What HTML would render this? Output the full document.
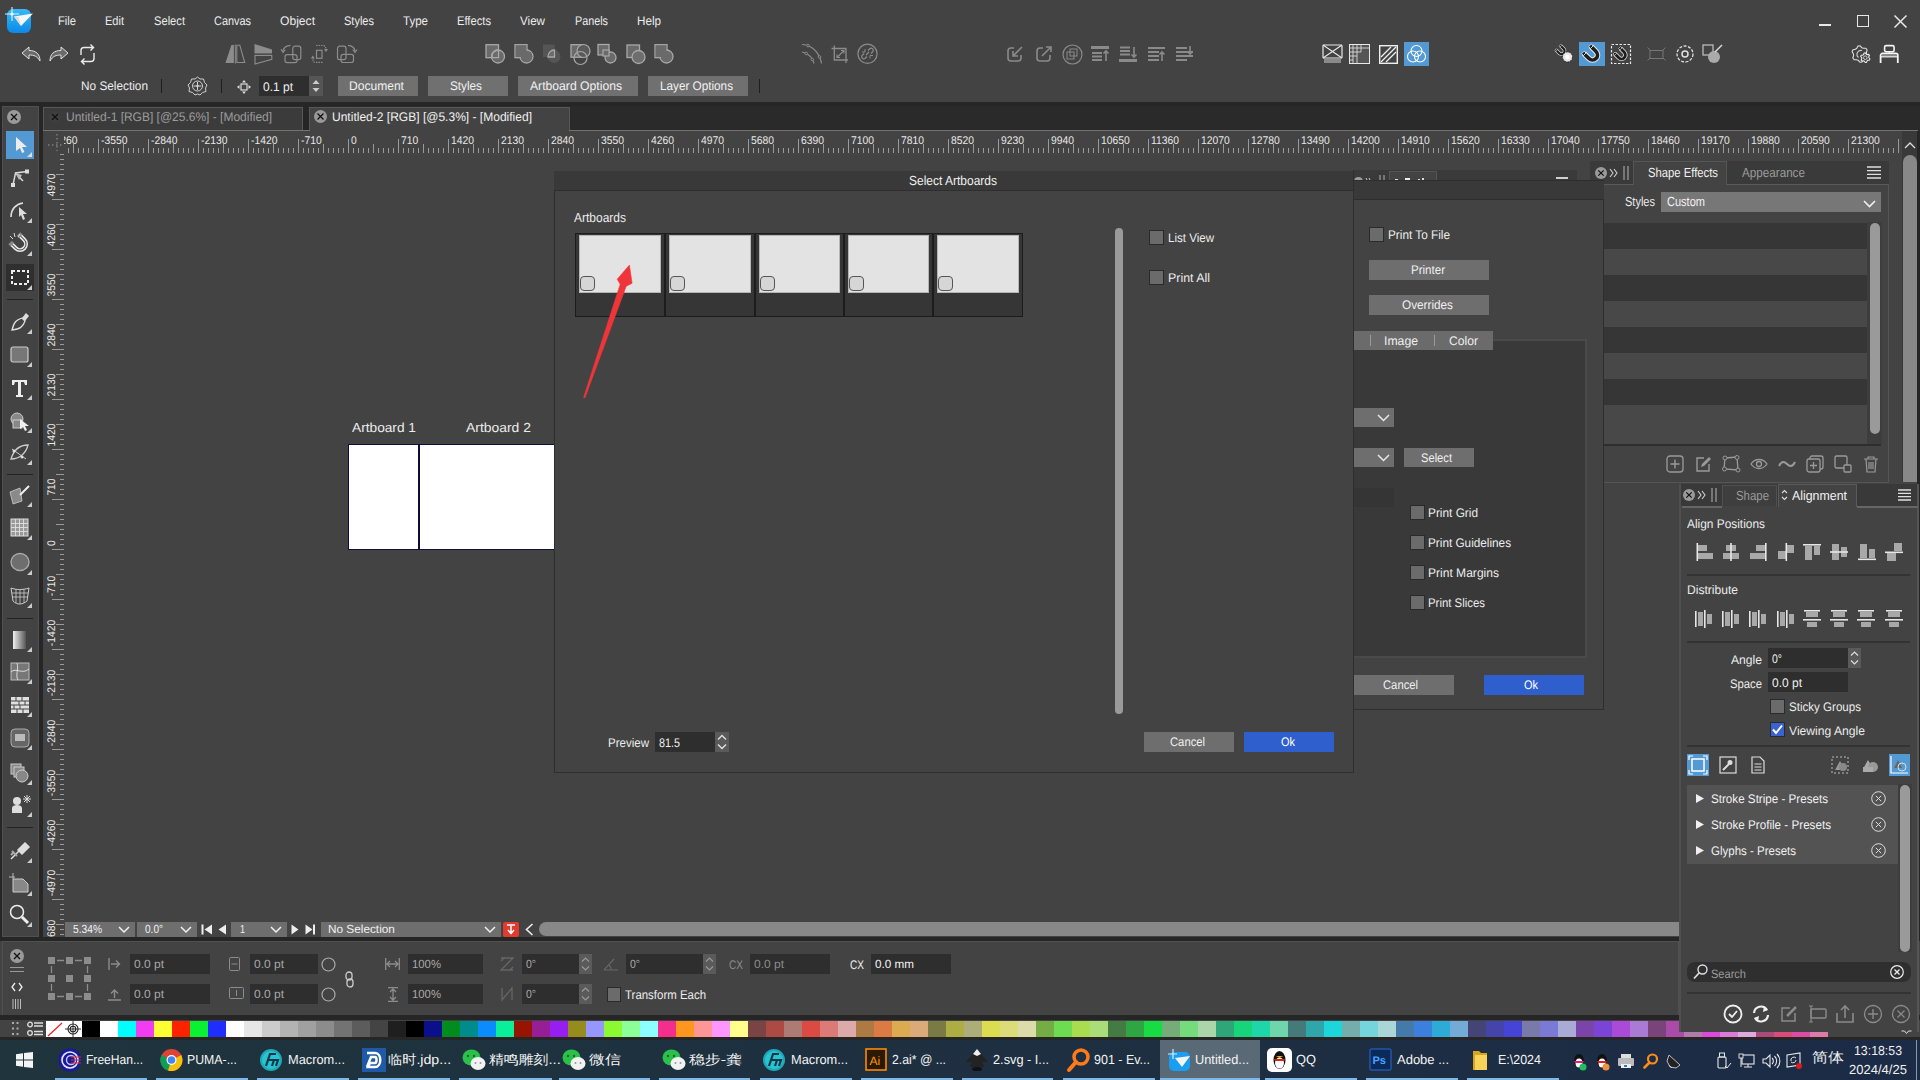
<!DOCTYPE html><html><head><meta charset="utf-8"><style>
*{margin:0;padding:0;box-sizing:border-box}
html,body{width:1920px;height:1080px;overflow:hidden;background:#434343;font-family:"Liberation Sans",sans-serif;text-rendering:geometricPrecision;color:#e6e6e6;font-size:12px;position:relative}
.ab{position:absolute}
.t{position:absolute;white-space:nowrap;transform-origin:0 50%}
svg{position:absolute;overflow:visible}
</style></head><body>
<div class="ab" style="left:0px;top:0px;width:1920px;height:102px;background:#434343;"></div>
<div class="ab" style="left:0px;top:102px;width:1920px;height:4px;background:#262626;"></div>
<svg style="left:5px;top:7px;" width="29" height="27" viewBox="0 0 29 27">
<defs><linearGradient id="lg" x1="0" y1="0" x2="0" y2="1"><stop offset="0" stop-color="#38b8f8"/><stop offset="1" stop-color="#0a8ae6"/></linearGradient></defs>
<rect x="2" y="2" width="24" height="24" rx="6" fill="url(#lg)"/>
<path d="M9 9.5 L28 6.5 L16 19 Z" fill="#f6f6f6"/><path d="M9 9.5 L16 19 L13.5 10 Z" fill="#d8dde2"/>
<path d="M0 7 H14 M7 0 V14" stroke="#d8f2ff" stroke-width="1.1"/><circle cx="7" cy="7" r="1.6" fill="#fff"/>
</svg>
<div class="t" style="left:58.0px;top:14.5px;font-size:12.50px;line-height:12.50px;color:#ececec;transform:scaleX(0.894);">File</div>
<div class="t" style="left:105.0px;top:14.5px;font-size:12.50px;line-height:12.50px;color:#ececec;transform:scaleX(0.882);">Edit</div>
<div class="t" style="left:154.0px;top:14.5px;font-size:12.50px;line-height:12.50px;color:#ececec;transform:scaleX(0.892);">Select</div>
<div class="t" style="left:214.0px;top:14.5px;font-size:12.50px;line-height:12.50px;color:#ececec;transform:scaleX(0.873);">Canvas</div>
<div class="t" style="left:280.0px;top:14.5px;font-size:12.50px;line-height:12.50px;color:#ececec;transform:scaleX(0.969);">Object</div>
<div class="t" style="left:344.0px;top:14.5px;font-size:12.50px;line-height:12.50px;color:#ececec;transform:scaleX(0.881);">Styles</div>
<div class="t" style="left:403.0px;top:14.5px;font-size:12.50px;line-height:12.50px;color:#ececec;transform:scaleX(0.923);">Type</div>
<div class="t" style="left:457.0px;top:14.5px;font-size:12.50px;line-height:12.50px;color:#ececec;transform:scaleX(0.895);">Effects</div>
<div class="t" style="left:520.0px;top:14.5px;font-size:12.50px;line-height:12.50px;color:#ececec;transform:scaleX(0.931);">View</div>
<div class="t" style="left:575.0px;top:14.5px;font-size:12.50px;line-height:12.50px;color:#ececec;transform:scaleX(0.863);">Panels</div>
<div class="t" style="left:637.0px;top:14.5px;font-size:12.50px;line-height:12.50px;color:#ececec;transform:scaleX(0.934);">Help</div>
<div class="ab" style="left:1819px;top:24px;width:12px;height:1.5px;background:#e8e8e8;"></div>
<div class="ab" style="left:1857px;top:15px;width:12px;height:12px;background:transparent;border:1.5px solid #e8e8e8"></div>
<svg style="left:1894px;top:15px;" width="13" height="13" viewBox="0 0 13 13"><path d="M0.5 0.5 L12.5 12.5 M12.5 0.5 L0.5 12.5" stroke="#e8e8e8" stroke-width="1.5"/></svg>
<svg style="left:21px;top:46px;" width="21" height="16" viewBox="0 0 21 16"><path d="M1 7 L8 1 V4.5 C15 4.5 19 8 19 15 C16 10 13 9 8 9 V13 Z" fill="#6a6a6a" stroke="#e0e0e0" stroke-width="1"/></svg>
<svg style="left:48px;top:46px;" width="21" height="16" viewBox="0 0 21 16"><path d="M20 7 L13 1 V4.5 C6 4.5 2 8 2 15 C5 10 8 9 13 9 V13 Z" fill="#6a6a6a" stroke="#e0e0e0" stroke-width="1"/></svg>
<svg style="left:79px;top:44px;" width="17" height="21" viewBox="0 0 17 21"><path d="M2 11 V6.5 A3 3 0 0 1 5 3.5 H14.5 M11.5 0.5 L14.5 3.5 L11.5 6.5 M15 9 V14.5 A3 3 0 0 1 12 17.5 H2.5 M5.5 14.5 L2.5 17.5 L5.5 20.5" fill="none" stroke="#ececec" stroke-width="1.4"/></svg>
<svg style="left:220px;top:40px;" width="144" height="28" viewBox="0 0 144 28">
<path d="M5.6 22.5 L11.4 5 H13.9 V23 H5.6 Z" fill="#8c8c8c"/><path d="M15.3 4.5 V23.5" stroke="#8c8c8c" stroke-width="1"/><path d="M16.8 5.2 H19.8 L24.7 22.5 H16.8 Z" fill="none" stroke="#8c8c8c" stroke-width="1.1"/>
<path d="M34.5 4 L52 9.5 V13.5 H34.5 Z" fill="#8c8c8c"/><path d="M34.5 14.2 H52" stroke="#555" stroke-width="1"/><path d="M35 15.5 H51.8 V19.3 L35 24 Z" fill="none" stroke="#8c8c8c" stroke-width="1.1"/>
<rect x="72.8" y="6.2" width="8" height="13.5" rx="2.2" fill="none" stroke="#8c8c8c" stroke-width="1.2"/><rect x="65" y="14.7" width="12" height="8" rx="2.2" fill="none" stroke="#8c8c8c" stroke-width="1.2"/><path d="M70.5 5.3 C66 5.5 63.5 8 62.8 10.8" fill="none" stroke="#8c8c8c" stroke-width="1.2"/><path d="M61 9.3 L63 12.5 L65.3 9.6" fill="none" stroke="#8c8c8c" stroke-width="1.2"/>
<rect x="96.5" y="10.3" width="5.5" height="8" fill="none" stroke="#8c8c8c" stroke-width="1.2"/><path d="M96 5.5 H103 C105 5.5 106 7 106 9.5" fill="none" stroke="#8c8c8c" stroke-width="1.2" stroke-dasharray="1.5 1"/><path d="M104 9 L106 12.3 L108 9 Z" fill="#8c8c8c"/><path d="M102.5 22.3 H95.5 C93.5 22.3 92.8 21 92.8 18" fill="none" stroke="#8c8c8c" stroke-width="1.2" stroke-dasharray="1.5 1"/><path d="M90.8 18.5 L92.8 15.5 L94.8 18.5 Z" fill="#8c8c8c"/>
<rect x="117.5" y="6.2" width="8.5" height="13.5" rx="2.2" fill="none" stroke="#8c8c8c" stroke-width="1.2"/><rect x="121" y="14.3" width="12.5" height="8.2" rx="2.2" fill="none" stroke="#8c8c8c" stroke-width="1.2"/><path d="M128 5.3 C132 5.5 134.5 8 135 11" fill="none" stroke="#8c8c8c" stroke-width="1.2"/><path d="M132.8 9.5 L135 12.5 L137 9.5" fill="none" stroke="#8c8c8c" stroke-width="1.2"/>
</svg>
<svg style="left:485px;top:44px;" width="20" height="21" viewBox="0 0 20 21"><rect x="1" y="0.7" width="12.5" height="13" fill="#6a6a6a" stroke="#a8a8a8" stroke-width="1.3"/><circle cx="13" cy="12.5" r="6.5" fill="#6a6a6a" stroke="#a8a8a8" stroke-width="1.3"/><path d="M13.5 6 V13.7 H6.5" fill="none" stroke="#a8a8a8" stroke-width="1.3"/><path d="M7 14 A6.5 6.5 0 0 1 13 6" fill="none" stroke="#a8a8a8" stroke-width="1.3"/></svg>
<svg style="left:514px;top:44px;" width="20" height="21" viewBox="0 0 20 21"><rect x="1" y="0.7" width="12" height="13" fill="#6a6a6a" stroke="#a8a8a8" stroke-width="1.3"/><circle cx="12.5" cy="12.5" r="6.5" fill="#6a6a6a" stroke="#a8a8a8" stroke-width="1.3"/><rect x="1.7" y="1.4" width="10.6" height="11.6" fill="#6a6a6a"/><circle cx="12.5" cy="12.5" r="5.8" fill="#6a6a6a"/></svg>
<svg style="left:542px;top:44px;" width="20" height="21" viewBox="0 0 20 21"><rect x="1" y="0.5" width="11.5" height="12.5" fill="#555"/><circle cx="12" cy="12.5" r="6.5" fill="#555"/><path d="M12.5 6 V13 H6 A6.5 6.5 0 0 1 12.5 6 Z" fill="#6a6a6a" stroke="#a8a8a8" stroke-width="1.3"/></svg>
<svg style="left:570px;top:44px;" width="20" height="21" viewBox="0 0 20 21"><rect x="1" y="0.7" width="11.5" height="12.5" fill="#6a6a6a" stroke="#a8a8a8" stroke-width="1.3"/><circle cx="13.5" cy="7" r="6.5" fill="#5a5a5a" stroke="#a8a8a8" stroke-width="1.2"/><circle cx="10.5" cy="14" r="6.5" fill="none" stroke="#a8a8a8" stroke-width="1.2"/></svg>
<svg style="left:597px;top:44px;" width="20" height="21" viewBox="0 0 20 21"><rect x="1" y="0.5" width="11" height="10.5" fill="#6a6a6a" stroke="#a8a8a8" stroke-width="1.3"/><circle cx="13.5" cy="13.5" r="5.5" fill="#6a6a6a" stroke="#a8a8a8" stroke-width="1.3"/><rect x="6" y="6" width="6" height="6" fill="#6a6a6a" stroke="#a8a8a8" stroke-width="1.2"/></svg>
<svg style="left:626px;top:44px;" width="20" height="21" viewBox="0 0 20 21"><rect x="1" y="1" width="12.5" height="12.5" fill="#6a6a6a" stroke="#a8a8a8" stroke-width="1.3"/><circle cx="12.5" cy="13" r="6.5" fill="#6e6e6e" stroke="#a8a8a8" stroke-width="1.3"/></svg>
<svg style="left:654px;top:44px;" width="20" height="21" viewBox="0 0 20 21"><rect x="1" y="0.7" width="12" height="13" fill="#6a6a6a" stroke="#a8a8a8" stroke-width="1.3"/><circle cx="12.5" cy="12.5" r="6.5" fill="#6a6a6a" stroke="#a8a8a8" stroke-width="1.3"/><rect x="1.7" y="1.4" width="10.6" height="11.6" fill="#6a6a6a"/></svg>
<svg style="left:796px;top:40px;" width="88" height="28" viewBox="0 0 88 28">
<path d="M6 4.5 C10 4.8 12 5.5 13 6 C18 8.5 22 13 24 18 C24.8 20 25.3 22 25.5 23.5" fill="none" stroke="#8c8c8c" stroke-width="1.2"/>
<path d="M6 12 C8 12.5 9 13 10.5 13.5 C13 15 15 17 16.5 19.5 C17.3 21 17.7 22.5 18 23.5" fill="none" stroke="#8c8c8c" stroke-width="1.2"/>
<circle cx="12" cy="5.6" r="1.3" fill="#434343" stroke="#8c8c8c"/><circle cx="23.5" cy="17" r="1.3" fill="#434343" stroke="#8c8c8c"/><circle cx="10.2" cy="13.5" r="1.3" fill="#434343" stroke="#8c8c8c"/><circle cx="16.3" cy="19.5" r="1.3" fill="#434343" stroke="#8c8c8c"/>
<path d="M38.3 5.5 V20 H52 M35.5 8.5 H50 V23" fill="none" stroke="#8c8c8c" stroke-width="1.3"/>
<path d="M41 17.5 L48 10.5 M41 14.5 V17.5 H44 M45 10.5 H48 V13.5" fill="none" stroke="#8c8c8c" stroke-width="1.1"/>
<circle cx="71.5" cy="13.8" r="9.6" fill="none" stroke="#8c8c8c" stroke-width="1.2"/>
<path d="M72 10.5 L74 8.5 A2.2 2.2 0 0 1 77 11.5 L75 13.5 M71 16.5 L69 18.5 A2.2 2.2 0 0 1 66 15.5 L68 13.5 M70 15 L73 12" fill="none" stroke="#8c8c8c" stroke-width="1.2"/>
<path d="M66 12 H69 V9 M77 15.5 H74 V18.5" fill="none" stroke="#8c8c8c" stroke-width="1"/>
</svg>
<svg style="left:1007px;top:46px;" width="17" height="16" viewBox="0 0 17 16"><path d="M7 2 H4 A3 3 0 0 0 1 5 V12 A3 3 0 0 0 4 15 H11 A3 3 0 0 0 14 12 V9 M15 1 L6 10 M6 5 V10 H11" fill="none" stroke="#8a8a8a" stroke-width="1.6"/></svg>
<svg style="left:1036px;top:46px;" width="17" height="16" viewBox="0 0 17 16"><path d="M7 2 H4 A3 3 0 0 0 1 5 V12 A3 3 0 0 0 4 15 H11 A3 3 0 0 0 14 12 V9 M6 10 L15 1 M10 1 H15 V6" fill="none" stroke="#8a8a8a" stroke-width="1.6"/></svg>
<svg style="left:1062px;top:44px;" width="21" height="21" viewBox="0 0 21 21"><circle cx="10.5" cy="10.5" r="9.5" fill="none" stroke="#8a8a8a" stroke-width="1.2"/><rect x="5" y="8" width="7" height="7" fill="none" stroke="#8a8a8a"/><rect x="8" y="5" width="7" height="7" fill="none" stroke="#8a8a8a"/></svg>
<svg style="left:1091px;top:46px;" width="19" height="16" viewBox="0 0 19 16"><rect x="0" y="0" width="18" height="3" fill="#8a8a8a"/><path d="M1 7 H11 M1 10.5 H11 M1 14 H11" stroke="#8a8a8a" stroke-width="1.8"/><path d="M15 5 V15 M12.5 7.5 L15 5 L17.5 7.5" fill="none" stroke="#8a8a8a" stroke-width="1.6"/></svg>
<svg style="left:1119px;top:46px;" width="19" height="16" viewBox="0 0 19 16"><rect x="0" y="13" width="18" height="3" fill="#8a8a8a"/><path d="M1 1.5 H11 M1 5 H11 M1 8.5 H11" stroke="#8a8a8a" stroke-width="1.8"/><path d="M15 1 V11 M12.5 8.5 L15 11 L17.5 8.5" fill="none" stroke="#8a8a8a" stroke-width="1.6"/></svg>
<svg style="left:1147px;top:46px;" width="19" height="16" viewBox="0 0 19 16"><path d="M1 2 H18 M1 6 H12 M1 10 H12 M1 14 H12" stroke="#8a8a8a" stroke-width="1.8"/><path d="M15 6 V15 M12.5 8.5 L15 6 L17.5 8.5" fill="none" stroke="#8a8a8a" stroke-width="1.6"/></svg>
<svg style="left:1175px;top:46px;" width="19" height="16" viewBox="0 0 19 16"><path d="M1 2 H12 M1 6 H18 M1 10 H18 M1 14 H12" stroke="#8a8a8a" stroke-width="1.8"/><path d="M15 0 V8 M12.5 5.5 L15 8 L17.5 5.5" fill="none" stroke="#8a8a8a" stroke-width="1.6"/></svg>
<svg style="left:1322px;top:44px;" width="21" height="20" viewBox="0 0 21 20"><rect x="1" y="1" width="19" height="13" rx="1" fill="none" stroke="#e8e8e8" stroke-width="1.2"/><path d="M1 1 L20 14 M20 1 L1 14" stroke="#e8e8e8" stroke-width="1.1"/><rect x="2" y="15" width="17" height="4" fill="#8a8a8a"/></svg>
<svg style="left:1349px;top:44px;" width="21" height="20" viewBox="0 0 21 20"><rect x="0.5" y="0.5" width="20" height="19" fill="#555" stroke="#e8e8e8"/><path d="M4 1 V19 M8 1 V19 M12 1 V8 M1 4 H20 M1 8 H12 M1 12 H8 M1 16 H4" stroke="#e8e8e8" stroke-width="0.8"/></svg>
<svg style="left:1379px;top:45px;" width="19" height="19" viewBox="0 0 19 19"><rect x="0.7" y="0.7" width="17.6" height="17.6" fill="none" stroke="#f0f0f0" stroke-width="1.4"/><path d="M2 12 L12 2 M2 17 L17 2 M7 17 L17 7" stroke="#f0f0f0" stroke-width="1.3"/></svg>
<div class="ab" style="left:1404px;top:42px;width:25px;height:24px;background:#5399d4;"></div>
<svg style="left:1404px;top:42px;" width="25" height="24" viewBox="0 0 25 24"><circle cx="12.5" cy="9" r="5.5" fill="none" stroke="#fff" stroke-width="1.1"/><circle cx="9" cy="14.5" r="5.5" fill="none" stroke="#fff" stroke-width="1.1"/><circle cx="16" cy="14.5" r="5.5" fill="none" stroke="#fff" stroke-width="1.1"/></svg>
<svg style="left:1550px;top:40px;" width="26" height="26" viewBox="0 0 26 26"><g transform="translate(11.5 11) rotate(-45) scale(0.62)"><path d="M-5 -7 V0 A5 5 0 0 0 5 0 V-7" fill="none" stroke="#e8e8e8" stroke-width="5.6"/><path d="M-5 -6.2 V0 A5 5 0 0 0 5 0 V-6.2" fill="none" stroke="#1e1e1e" stroke-width="3.6"/><rect x="-6.8" y="-8.6" width="3.6" height="2.6" fill="#1e1e1e" stroke="#e8e8e8" stroke-width="0.8"/><rect x="3.2" y="-8.6" width="3.6" height="2.6" fill="#1e1e1e" stroke="#e8e8e8" stroke-width="0.8"/></g><circle cx="17.5" cy="17" r="5" fill="#e8e8e8" stroke="#222" stroke-width="0.8" stroke-dasharray="2 1"/><circle cx="17.5" cy="17" r="2.2" fill="#fff"/></svg>
<div class="ab" style="left:1579px;top:42px;width:26px;height:24px;background:#5399d4;"></div>
<svg style="left:1579px;top:42px;" width="26" height="24" viewBox="0 0 26 24"><g transform="translate(13.5 13) rotate(-45) scale(1.0)"><path d="M-5 -7 V0 A5 5 0 0 0 5 0 V-7" fill="none" stroke="#e8e8e8" stroke-width="5.6"/><path d="M-5 -6.2 V0 A5 5 0 0 0 5 0 V-6.2" fill="none" stroke="#1e1e1e" stroke-width="3.6"/><rect x="-6.8" y="-8.6" width="3.6" height="2.6" fill="#1e1e1e" stroke="#e8e8e8" stroke-width="0.8"/><rect x="3.2" y="-8.6" width="3.6" height="2.6" fill="#1e1e1e" stroke="#e8e8e8" stroke-width="0.8"/></g></svg>
<svg style="left:1611px;top:44px;" width="20" height="20" viewBox="0 0 20 20"><rect x="0.5" y="0.5" width="19" height="19" fill="none" stroke="#e8e8e8" stroke-width="1.2" stroke-dasharray="2.5 1.5"/><g transform="translate(10.5 11) rotate(-45) scale(0.78)"><path d="M-5 -7 V0 A5 5 0 0 0 5 0 V-7" fill="none" stroke="#e8e8e8" stroke-width="5.6"/><path d="M-5 -6.2 V0 A5 5 0 0 0 5 0 V-6.2" fill="none" stroke="#1e1e1e" stroke-width="3.6"/><rect x="-6.8" y="-8.6" width="3.6" height="2.6" fill="#1e1e1e" stroke="#e8e8e8" stroke-width="0.8"/><rect x="3.2" y="-8.6" width="3.6" height="2.6" fill="#1e1e1e" stroke="#e8e8e8" stroke-width="0.8"/></g></svg>
<svg style="left:1647px;top:47px;" width="19" height="14" viewBox="0 0 19 14"><rect x="3" y="3.5" width="13" height="8" fill="none" stroke="#777" stroke-width="1"/><path d="M0.5 0.5 L3 3 M18.5 0.5 L16 3 M0.5 13.5 L3 11 M18.5 13.5 L16 11" stroke="#777" stroke-width="1"/></svg>
<svg style="left:1676px;top:45px;" width="18" height="18" viewBox="0 0 18 18"><circle cx="9" cy="9" r="8" fill="none" stroke="#e0e0e0" stroke-width="1.3" stroke-dasharray="3 1.5"/><circle cx="9" cy="9" r="3" fill="none" stroke="#e0e0e0" stroke-width="1.5"/></svg>
<svg style="left:1702px;top:44px;" width="21" height="20" viewBox="0 0 21 20"><rect x="1" y="1" width="10" height="10" fill="none" stroke="#bbb" stroke-width="1.3"/><circle cx="12" cy="13" r="6" fill="#aaa"/><path d="M13 8 L20 1" stroke="#ddd" stroke-width="1.5"/></svg>
<svg style="left:1845px;top:40px;" width="30" height="28" viewBox="0 0 30 28"><path d="M12.97 6.05 L15.10 5.80 L16.78 7.65 L18.37 8.32 L20.87 8.27 L22.15 9.98 L21.39 12.37 L21.60 14.08 L22.89 16.22 L22.05 18.18 L19.61 18.72 L18.23 19.75 L17.03 21.95 L14.90 22.20 L13.22 20.35 L11.63 19.68 L9.13 19.73 L7.85 18.02 L8.61 15.63 L8.40 13.92 L7.11 11.78 L7.95 9.82 L10.39 9.28 L11.77 8.25 Z" fill="#434343" stroke="#e0e0e0" stroke-width="1.1" stroke-linejoin="round"/><path d="M17 10.5 A4 4 0 0 0 13.5 17.5" fill="none" stroke="#ccc" stroke-width="1.1"/><path d="M19.11 13.05 L20.36 12.90 L21.27 14.23 L22.14 14.60 L23.73 14.35 L24.48 15.35 L23.79 16.81 L23.90 17.74 L24.92 19.00 L24.43 20.15 L22.82 20.28 L22.06 20.84 L21.49 22.35 L20.24 22.50 L19.33 21.17 L18.46 20.80 L16.87 21.05 L16.12 20.05 L16.81 18.59 L16.70 17.66 L15.68 16.40 L16.17 15.25 L17.78 15.12 L18.54 14.56 Z" fill="#434343" stroke="#e8e8e8" stroke-width="1.1" stroke-linejoin="round"/><circle cx="20.3" cy="17.7" r="1.8" fill="none" stroke="#ccc" stroke-width="1"/></svg>
<svg style="left:1875px;top:40px;" width="30" height="28" viewBox="0 0 30 28"><rect x="9.6" y="5.6" width="9.5" height="6.2" rx="1.6" fill="none" stroke="#f4f4f4" stroke-width="1.6"/><path d="M14.3 11.8 V13.5" stroke="#f4f4f4" stroke-width="1.4"/><path d="M5.6 23 V15.5 A2 2 0 0 1 7.6 13.5 H20.8 A2 2 0 0 1 22.8 15.5 V23" fill="none" stroke="#f4f4f4" stroke-width="1.8"/><rect x="6.6" y="14.3" width="15.2" height="2" fill="#888"/><path d="M5.6 16.8 H22.8" stroke="#f4f4f4" stroke-width="1.2"/></svg>
<div class="t" style="left:81.0px;top:79.5px;font-size:12.50px;line-height:12.50px;color:#ececec;transform:scaleX(0.945);">No Selection</div>
<div class="ab" style="left:161px;top:79px;width:1px;height:14px;background:#1e1e1e;"></div>
<svg style="left:187px;top:76px;" width="21" height="20" viewBox="0 0 21 20"><path d="M10.5 1 L13 3 L16.5 3 L17.5 6.5 L20 9 L18.5 12 L19 15.5 L15.5 16.5 L13 19 L10.5 18 L8 19 L5.5 16.5 L2 15.5 L2.5 12 L1 9 L3.5 6.5 L4.5 3 L8 3 Z" fill="none" stroke="#cfcfcf" stroke-width="1"/><circle cx="10.5" cy="10" r="5" fill="none" stroke="#cfcfcf"/><path d="M10.5 6 V14 M6.5 10 H14.5" stroke="#cfcfcf" stroke-width="1"/><circle cx="10.5" cy="10" r="1.3" fill="#cfcfcf"/></svg>
<div class="ab" style="left:221px;top:79px;width:1px;height:14px;background:#1e1e1e;"></div>
<svg style="left:237px;top:80px;" width="14" height="14" viewBox="0 0 14 14"><rect x="4" y="4" width="6" height="6" fill="none" stroke="#ddd" stroke-width="1.2"/><path d="M7 0 L9 2.5 H5 Z M7 14 L9 11.5 H5 Z M0 7 L2.5 5 V9 Z M14 7 L11.5 5 V9 Z" fill="#ddd"/></svg>
<div class="ab" style="left:259px;top:76px;width:50px;height:20px;background:#2e2e2e;"></div>
<div class="t" style="left:263.0px;top:81.0px;font-size:12.50px;line-height:12.50px;color:#f0f0f0;transform:scaleX(0.959);">0.1 pt</div>
<div class="ab" style="left:309px;top:76px;width:14px;height:20px;background:#555;"></div>
<svg style="left:309px;top:76px;" width="14" height="20" viewBox="0 0 14 20"><path d="M3.5 8 L7 4 L10.5 8 Z M3.5 12 L7 16 L10.5 12 Z" fill="#ccc"/></svg>
<div class="ab" style="left:338px;top:76px;width:80px;height:20px;background:#707070;"></div>
<div class="t" style="left:348.5px;top:79.5px;font-size:12.50px;line-height:12.50px;color:#f0f0f0;transform:scaleX(0.965);">Document</div>
<div class="ab" style="left:428px;top:76px;width:80px;height:20px;background:#707070;"></div>
<div class="t" style="left:450.0px;top:79.5px;font-size:12.50px;line-height:12.50px;color:#f0f0f0;transform:scaleX(0.940);">Styles</div>
<div class="ab" style="left:518px;top:76px;width:120px;height:20px;background:#707070;"></div>
<div class="t" style="left:530.0px;top:79.5px;font-size:12.50px;line-height:12.50px;color:#f0f0f0;transform:scaleX(0.974);">Artboard Options</div>
<div class="ab" style="left:648px;top:76px;width:100px;height:20px;background:#707070;"></div>
<div class="t" style="left:659.5px;top:79.5px;font-size:12.50px;line-height:12.50px;color:#f0f0f0;transform:scaleX(0.938);">Layer Options</div>
<div class="ab" style="left:759px;top:79px;width:1px;height:14px;background:#1e1e1e;"></div>
<div class="ab" style="left:0px;top:106px;width:2px;height:831px;background:#262626;"></div>
<div class="ab" style="left:2px;top:106px;width:37px;height:831px;background:#434343;border:1px solid #505050"></div>
<div class="ab" style="left:39px;top:106px;width:4px;height:831px;background:#262626;"></div>
<svg style="left:7px;top:110px;" width="14" height="14" viewBox="0 0 14 14"><circle cx="7" cy="7" r="7" fill="#9a9a9a"/><path d="M4 4 L10 10 M10 4 L4 10" stroke="#111" stroke-width="1.3"/></svg>
<div class="ab" style="left:6px;top:131px;width:28px;height:28px;background:#5399d4;"></div>
<svg style="left:6px;top:131px;" width="28" height="28" viewBox="0 0 28 28"><path d="M10 6 L21 16 L16 16 L18.5 21 L16 22 L14 17 L10 20 Z" fill="#ececec"/><path d="M26 21 L26 26 L21 26 Z" fill="#ddd"/></svg>
<div class="ab" style="left:6px;top:264px;width:28px;height:27px;background:#2f2f2f;"></div>
<svg style="left:8px;top:166px;" width="24" height="24" viewBox="0 0 24 24"><path d="M5 19 L7.5 7 L19 5.5" fill="none" stroke="#ddd" stroke-width="1.4"/><path d="M7.5 7 L15 15" stroke="#ddd" stroke-width="1.4"/><rect x="3" y="17" width="4" height="4" fill="#ddd"/><rect x="17" y="3.5" width="4" height="4" fill="#ddd"/><path d="M7.5 7 L14 9 L11 14 Z" fill="#bbb"/></svg>
<svg style="left:8px;top:199px;" width="24" height="24" viewBox="0 0 24 24"><path d="M3 18 C3 10 8 5 15 4" fill="none" stroke="#ddd" stroke-width="1.6"/><path d="M11 8 L19 15 L15 15 L17 20 L15 21 L13 16 L11 18 Z" fill="#ddd"/><path d="M24 19 L24 24 L19 24 Z" fill="#ccc"/></svg>
<svg style="left:8px;top:232px;" width="24" height="24" viewBox="0 0 24 24"><g transform="rotate(-45 12 12)"><path d="M6 6 V12 A6 6 0 0 0 18 12 V6" fill="none" stroke="#e8e8e8" stroke-width="4"/><path d="M6 6 V12 A6 6 0 0 0 18 12 V6" fill="none" stroke="#434343" stroke-width="1"/><rect x="3.5" y="4" width="5" height="3" fill="#888"/><rect x="15.5" y="4" width="5" height="3" fill="#888"/></g><path d="M2 4 L5 7 M6 1 L7 5 M12 2 L10 5" stroke="#ddd" stroke-width="1"/><path d="M24 19 L24 24 L19 24 Z" fill="#ccc"/></svg>
<svg style="left:8px;top:266px;" width="24" height="24" viewBox="0 0 24 24"><rect x="4" y="5" width="16" height="13" fill="none" stroke="#eee" stroke-width="2" stroke-dasharray="3 2"/><path d="M24 19 L24 24 L19 24 Z" fill="#ccc"/></svg>
<div class="ab" style="left:7px;top:299px;width:26px;height:1px;background:#222;"></div>
<svg style="left:8px;top:310px;" width="24" height="24" viewBox="0 0 24 24"><path d="M4 20 C6 12 8 10 14 8 L17 11 C15 17 12 19 4 20 Z" fill="none" stroke="#ddd" stroke-width="1.3"/><path d="M14 8 L18 3 L21 6 L17 11" fill="#ddd"/><path d="M24 19 L24 24 L19 24 Z" fill="#ccc"/></svg>
<svg style="left:8px;top:343px;" width="24" height="24" viewBox="0 0 24 24"><rect x="3" y="4" width="17" height="15" rx="2" fill="#777" stroke="#ccc" stroke-width="1.2"/><path d="M24 19 L24 24 L19 24 Z" fill="#ccc"/></svg>
<svg style="left:8px;top:376px;" width="24" height="24" viewBox="0 0 24 24"><path d="M4 4 H19 V9 H17 L16 6 H13 V19 H15 V21 H8 V19 H10 V6 H7 L6 9 H4 Z" fill="#eee"/><path d="M24 19 L24 24 L19 24 Z" fill="#ccc"/></svg>
<svg style="left:8px;top:409px;" width="24" height="24" viewBox="0 0 24 24"><circle cx="9" cy="10" r="6" fill="#888" stroke="#ccc"/><rect x="5" y="11" width="9" height="8" fill="#888" stroke="#ccc"/><path d="M12 10 L21 17 L17 17 L19 21 L17 22 L15 18 L12 20 Z" fill="#eee"/><path d="M24 19 L24 24 L19 24 Z" fill="#ccc"/></svg>
<svg style="left:8px;top:441px;" width="24" height="24" viewBox="0 0 24 24"><path d="M3 18 C6 8 12 4 20 4 C18 12 12 18 3 18 Z" fill="none" stroke="#ccc" stroke-width="1.3"/><path d="M4 8 L18 18" stroke="#ccc"/><circle cx="6" cy="10" r="1.5" fill="#ddd"/><circle cx="14" cy="16" r="1.5" fill="#ddd"/><path d="M24 19 L24 24 L19 24 Z" fill="#ccc"/></svg>
<div class="ab" style="left:7px;top:474px;width:26px;height:1px;background:#222;"></div>
<svg style="left:8px;top:483px;" width="24" height="24" viewBox="0 0 24 24"><path d="M2 9 L12 5 L14 18 L5 21 Z" fill="#8a8a8a" stroke="#ccc" stroke-width="0.8"/><path d="M12 12 L21 3" stroke="#eee" stroke-width="2"/><path d="M24 19 L24 24 L19 24 Z" fill="#ccc"/></svg>
<svg style="left:8px;top:516px;" width="24" height="24" viewBox="0 0 24 24"><rect x="3" y="3" width="17" height="17" fill="#9a9a9a" stroke="#ddd" stroke-width="1"/><path d="M3 7.5 H20 M3 11.5 H20 M3 15.5 H20 M7.5 3 V20 M11.5 3 V20 M15.5 3 V20" stroke="#e0e0e0" stroke-width="0.9"/><path d="M24 19 L24 24 L19 24 Z" fill="#ccc"/></svg>
<svg style="left:8px;top:551px;" width="24" height="24" viewBox="0 0 24 24"><ellipse cx="12" cy="11" rx="9" ry="8.5" fill="#6e6e6e" stroke="#a8a8a8" stroke-width="1.4"/><path d="M24 19 L24 24 L19 24 Z" fill="#ccc"/></svg>
<svg style="left:8px;top:584px;" width="24" height="24" viewBox="0 0 24 24"><path d="M3 4 C8 6 15 6 21 4 L19 17 C14 21 9 21 5 17 Z" fill="none" stroke="#ccc" stroke-width="1"/><path d="M8 5 V19 M12 6 V20 M16 5 V19 M4 9 H20 M4 13 H20" stroke="#ccc" stroke-width="0.8"/><path d="M24 19 L24 24 L19 24 Z" fill="#ccc"/></svg>
<div class="ab" style="left:7px;top:618px;width:26px;height:1px;background:#222;"></div>
<svg style="left:8px;top:628px;" width="24" height="24" viewBox="0 0 24 24"><defs><linearGradient id="gt" x1="0" x2="1"><stop offset="0" stop-color="#f0f0f0"/><stop offset="1" stop-color="#555"/></linearGradient></defs><rect x="5" y="3" width="13" height="18" fill="url(#gt)"/><path d="M24 19 L24 24 L19 24 Z" fill="#ccc"/></svg>
<svg style="left:8px;top:660px;" width="24" height="24" viewBox="0 0 24 24"><rect x="3" y="3" width="18" height="17" fill="#777" stroke="#bbb"/><path d="M3 12 C8 7 14 15 21 9 M9 3 C11 10 7 15 10 20" fill="none" stroke="#ddd"/><path d="M24 19 L24 24 L19 24 Z" fill="#ccc"/></svg>
<svg style="left:8px;top:693px;" width="24" height="24" viewBox="0 0 24 24"><rect x="3" y="4" width="18" height="16" fill="#e0e0e0"/><path d="M3 8 H21 M3 12 H21 M3 16 H21 M8 4 V8 M14 4 V8 M11 8 V12 M17 8 V12 M6 12 V16 M12 12 V16 M9 16 V20 M15 16 V20" stroke="#444" stroke-width="1"/><path d="M24 19 L24 24 L19 24 Z" fill="#ccc"/></svg>
<svg style="left:8px;top:726px;" width="24" height="24" viewBox="0 0 24 24"><rect x="3" y="3" width="18" height="18" rx="4" fill="#666" stroke="#aaa"/><rect x="7" y="8" width="10" height="7" fill="#bbb"/><path d="M24 19 L24 24 L19 24 Z" fill="#ccc"/></svg>
<svg style="left:8px;top:761px;" width="24" height="24" viewBox="0 0 24 24"><rect x="3" y="3" width="10" height="10" fill="#888" stroke="#ccc"/><rect x="6" y="6" width="10" height="10" fill="#888" stroke="#ccc"/><circle cx="14" cy="15" r="6" fill="#888" stroke="#ccc"/><path d="M24 19 L24 24 L19 24 Z" fill="#ccc"/></svg>
<svg style="left:8px;top:793px;" width="24" height="24" viewBox="0 0 24 24"><circle cx="9" cy="8" r="4" fill="#ddd"/><path d="M4 15 C4 11 14 11 14 15 V20 H4 Z" fill="#ddd"/><path d="M16 3 L22 9 M22 3 L16 9 M19 2 V10 M15 6 H23" stroke="#ddd" stroke-width="1"/><path d="M24 19 L24 24 L19 24 Z" fill="#ccc"/></svg>
<div class="ab" style="left:7px;top:827px;width:26px;height:1px;background:#222;"></div>
<svg style="left:8px;top:839px;" width="24" height="24" viewBox="0 0 24 24"><path d="M3 20 L13 10 M17 4 L21 8 L14 15 L10 11 Z" fill="#ddd" stroke="#ddd" stroke-width="1.5"/><path d="M4 12 L9 17 M3 16 L6 13" stroke="#aaa" stroke-width="2"/><path d="M24 19 L24 24 L19 24 Z" fill="#ccc"/></svg>
<svg style="left:8px;top:872px;" width="24" height="24" viewBox="0 0 24 24"><path d="M5 1 V7 M1 5 H7" stroke="#bbb"/><path d="M5 7 H15 L20 12 V20 H5 Z" fill="#888" stroke="#ccc"/><path d="M24 19 L24 24 L19 24 Z" fill="#ccc"/></svg>
<svg style="left:8px;top:903px;" width="24" height="24" viewBox="0 0 24 24"><circle cx="9" cy="9" r="6.5" fill="none" stroke="#eee" stroke-width="1.5"/><path d="M14 14 L20 20" stroke="#eee" stroke-width="3"/><path d="M24 19 L24 24 L19 24 Z" fill="#ccc"/></svg>
<div class="ab" style="left:43px;top:106px;width:1877px;height:25px;background:#2a2a2a;"></div>
<div class="ab" style="left:43px;top:107px;width:260px;height:24px;background:#3b3b3b;border:1px solid #575757;border-bottom:none"></div>
<div class="ab" style="left:303px;top:106px;width:6px;height:25px;background:#262626;"></div>
<div class="ab" style="left:309px;top:107px;width:261px;height:25px;background:#434343;border-top:1px solid #575757;border-left:1px solid #575757;border-right:1px solid #575757"></div>
<div class="ab" style="left:43px;top:130px;width:267px;height:1px;background:#727272;"></div>
<div class="ab" style="left:569px;top:130px;width:1349px;height:1px;background:#727272;"></div>
<svg style="left:49px;top:111px;" width="12" height="12" viewBox="0 0 12 12"><circle cx="6" cy="6" r="6" fill="#3f3f3f"/><path d="M3 3 L9 9 M9 3 L3 9" stroke="#111" stroke-width="1.2"/></svg>
<div class="t" style="left:66.0px;top:110.5px;font-size:12.50px;line-height:12.50px;color:#9b9b9b;transform:scaleX(0.959);">Untitled-1 [RGB] [@25.6%] - [Modified]</div>
<svg style="left:314px;top:110px;" width="13" height="13" viewBox="0 0 13 13"><circle cx="6.5" cy="6.5" r="6.5" fill="#999"/><path d="M3.5 3.5 L9.5 9.5 M9.5 3.5 L3.5 9.5" stroke="#111" stroke-width="1.3"/></svg>
<div class="t" style="left:332.0px;top:110.5px;font-size:12.50px;line-height:12.50px;color:#f2f2f2;transform:scaleX(0.962);">Untitled-2 [RGB] [@5.3%] - [Modified]</div>
<div class="ab" style="left:43px;top:131px;width:1859px;height:22px;background:#434343;"></div>
<div class="ab" style="left:43px;top:153px;width:21px;height:784px;background:#434343;"></div>
<svg style="left:43px;top:131px;" width="21" height="22" viewBox="0 0 21 22"><path d="M14 3 V20 M5 14 H21" stroke="#9a9a9a" stroke-dasharray="1.5 2.5"/></svg>
<svg style="left:0;top:0" width="1920" height="1080"><path d="M68.5 148V153M73.5 144V153M78.5 148V153M83.5 148V153M88.5 148V153M93.5 148V153M98.5 139V153M103.5 148V153M108.5 148V153M113.5 148V153M118.5 148V153M123.5 144V153M128.5 148V153M133.5 148V153M138.5 148V153M143.5 148V153M148.5 139V153M153.5 148V153M158.5 148V153M163.5 148V153M168.5 148V153M173.5 144V153M178.5 148V153M183.5 148V153M188.5 148V153M193.5 148V153M198.5 139V153M203.5 148V153M208.5 148V153M213.5 148V153M218.5 148V153M223.5 144V153M228.5 148V153M233.5 148V153M238.5 148V153M243.5 148V153M248.5 139V153M253.5 148V153M258.5 148V153M263.5 148V153M268.5 148V153M273.5 144V153M278.5 148V153M283.5 148V153M288.5 148V153M293.5 148V153M298.5 139V153M303.5 148V153M308.5 148V153M313.5 148V153M318.5 148V153M323.5 144V153M328.5 148V153M333.5 148V153M338.5 148V153M343.5 148V153M348.5 139V153M353.5 148V153M358.5 148V153M363.5 148V153M368.5 148V153M373.5 144V153M378.5 148V153M383.5 148V153M388.5 148V153M393.5 148V153M398.5 139V153M403.5 148V153M408.5 148V153M413.5 148V153M418.5 148V153M423.5 144V153M428.5 148V153M433.5 148V153M438.5 148V153M443.5 148V153M448.5 139V153M453.5 148V153M458.5 148V153M463.5 148V153M468.5 148V153M473.5 144V153M478.5 148V153M483.5 148V153M488.5 148V153M493.5 148V153M498.5 139V153M503.5 148V153M508.5 148V153M513.5 148V153M518.5 148V153M523.5 144V153M528.5 148V153M533.5 148V153M538.5 148V153M543.5 148V153M548.5 139V153M553.5 148V153M558.5 148V153M563.5 148V153M568.5 148V153M573.5 144V153M578.5 148V153M583.5 148V153M588.5 148V153M593.5 148V153M598.5 139V153M603.5 148V153M608.5 148V153M613.5 148V153M618.5 148V153M623.5 144V153M628.5 148V153M633.5 148V153M638.5 148V153M643.5 148V153M648.5 139V153M653.5 148V153M658.5 148V153M663.5 148V153M668.5 148V153M673.5 144V153M678.5 148V153M683.5 148V153M688.5 148V153M693.5 148V153M698.5 139V153M703.5 148V153M708.5 148V153M713.5 148V153M718.5 148V153M723.5 144V153M728.5 148V153M733.5 148V153M738.5 148V153M743.5 148V153M748.5 139V153M753.5 148V153M758.5 148V153M763.5 148V153M768.5 148V153M773.5 144V153M778.5 148V153M783.5 148V153M788.5 148V153M793.5 148V153M798.5 139V153M803.5 148V153M808.5 148V153M813.5 148V153M818.5 148V153M823.5 144V153M828.5 148V153M833.5 148V153M838.5 148V153M843.5 148V153M848.5 139V153M853.5 148V153M858.5 148V153M863.5 148V153M868.5 148V153M873.5 144V153M878.5 148V153M883.5 148V153M888.5 148V153M893.5 148V153M898.5 139V153M903.5 148V153M908.5 148V153M913.5 148V153M918.5 148V153M923.5 144V153M928.5 148V153M933.5 148V153M938.5 148V153M943.5 148V153M948.5 139V153M953.5 148V153M958.5 148V153M963.5 148V153M968.5 148V153M973.5 144V153M978.5 148V153M983.5 148V153M988.5 148V153M993.5 148V153M998.5 139V153M1003.5 148V153M1008.5 148V153M1013.5 148V153M1018.5 148V153M1023.5 144V153M1028.5 148V153M1033.5 148V153M1038.5 148V153M1043.5 148V153M1048.5 139V153M1053.5 148V153M1058.5 148V153M1063.5 148V153M1068.5 148V153M1073.5 144V153M1078.5 148V153M1083.5 148V153M1088.5 148V153M1093.5 148V153M1098.5 139V153M1103.5 148V153M1108.5 148V153M1113.5 148V153M1118.5 148V153M1123.5 144V153M1128.5 148V153M1133.5 148V153M1138.5 148V153M1143.5 148V153M1148.5 139V153M1153.5 148V153M1158.5 148V153M1163.5 148V153M1168.5 148V153M1173.5 144V153M1178.5 148V153M1183.5 148V153M1188.5 148V153M1193.5 148V153M1198.5 139V153M1203.5 148V153M1208.5 148V153M1213.5 148V153M1218.5 148V153M1223.5 144V153M1228.5 148V153M1233.5 148V153M1238.5 148V153M1243.5 148V153M1248.5 139V153M1253.5 148V153M1258.5 148V153M1263.5 148V153M1268.5 148V153M1273.5 144V153M1278.5 148V153M1283.5 148V153M1288.5 148V153M1293.5 148V153M1298.5 139V153M1303.5 148V153M1308.5 148V153M1313.5 148V153M1318.5 148V153M1323.5 144V153M1328.5 148V153M1333.5 148V153M1338.5 148V153M1343.5 148V153M1348.5 139V153M1353.5 148V153M1358.5 148V153M1363.5 148V153M1368.5 148V153M1373.5 144V153M1378.5 148V153M1383.5 148V153M1388.5 148V153M1393.5 148V153M1398.5 139V153M1403.5 148V153M1408.5 148V153M1413.5 148V153M1418.5 148V153M1423.5 144V153M1428.5 148V153M1433.5 148V153M1438.5 148V153M1443.5 148V153M1448.5 139V153M1453.5 148V153M1458.5 148V153M1463.5 148V153M1468.5 148V153M1473.5 144V153M1478.5 148V153M1483.5 148V153M1488.5 148V153M1493.5 148V153M1498.5 139V153M1503.5 148V153M1508.5 148V153M1513.5 148V153M1518.5 148V153M1523.5 144V153M1528.5 148V153M1533.5 148V153M1538.5 148V153M1543.5 148V153M1548.5 139V153M1553.5 148V153M1558.5 148V153M1563.5 148V153M1568.5 148V153M1573.5 144V153M1578.5 148V153M1583.5 148V153M1588.5 148V153M1593.5 148V153M1598.5 139V153M1603.5 148V153M1608.5 148V153M1613.5 148V153M1618.5 148V153M1623.5 144V153M1628.5 148V153M1633.5 148V153M1638.5 148V153M1643.5 148V153M1648.5 139V153M1653.5 148V153M1658.5 148V153M1663.5 148V153M1668.5 148V153M1673.5 144V153M1678.5 148V153M1683.5 148V153M1688.5 148V153M1693.5 148V153M1698.5 139V153M1703.5 148V153M1708.5 148V153M1713.5 148V153M1718.5 148V153M1723.5 144V153M1728.5 148V153M1733.5 148V153M1738.5 148V153M1743.5 148V153M1748.5 139V153M1753.5 148V153M1758.5 148V153M1763.5 148V153M1768.5 148V153M1773.5 144V153M1778.5 148V153M1783.5 148V153M1788.5 148V153M1793.5 148V153M1798.5 139V153M1803.5 148V153M1808.5 148V153M1813.5 148V153M1818.5 148V153M1823.5 144V153M1828.5 148V153M1833.5 148V153M1838.5 148V153M1843.5 148V153M1848.5 139V153M1853.5 148V153M1858.5 148V153M1863.5 148V153M1868.5 148V153M1873.5 144V153M1878.5 148V153M1883.5 148V153M1888.5 148V153M1893.5 148V153M1898.5 139V153" stroke="#9a9a9a" stroke-width="1"/></svg>
<div class="ab" style="left:64px;top:131px;width:1838px;height:22px;overflow:hidden">
<div class="t" style="left:-13.0px;top:4.7px;font-size:11.11px;line-height:11.11px;color:#e8e8e8;transform:scaleX(0.93)">-4260</div>
<div class="t" style="left:37.0px;top:4.7px;font-size:11.11px;line-height:11.11px;color:#e8e8e8;transform:scaleX(0.93)">-3550</div>
<div class="t" style="left:87.0px;top:4.7px;font-size:11.11px;line-height:11.11px;color:#e8e8e8;transform:scaleX(0.93)">-2840</div>
<div class="t" style="left:137.0px;top:4.7px;font-size:11.11px;line-height:11.11px;color:#e8e8e8;transform:scaleX(0.93)">-2130</div>
<div class="t" style="left:187.0px;top:4.7px;font-size:11.11px;line-height:11.11px;color:#e8e8e8;transform:scaleX(0.93)">-1420</div>
<div class="t" style="left:237.0px;top:4.7px;font-size:11.11px;line-height:11.11px;color:#e8e8e8;transform:scaleX(0.93)">-710</div>
<div class="t" style="left:287.0px;top:4.7px;font-size:11.11px;line-height:11.11px;color:#e8e8e8;transform:scaleX(0.93)">0</div>
<div class="t" style="left:337.0px;top:4.7px;font-size:11.11px;line-height:11.11px;color:#e8e8e8;transform:scaleX(0.93)">710</div>
<div class="t" style="left:387.0px;top:4.7px;font-size:11.11px;line-height:11.11px;color:#e8e8e8;transform:scaleX(0.93)">1420</div>
<div class="t" style="left:437.0px;top:4.7px;font-size:11.11px;line-height:11.11px;color:#e8e8e8;transform:scaleX(0.93)">2130</div>
<div class="t" style="left:487.0px;top:4.7px;font-size:11.11px;line-height:11.11px;color:#e8e8e8;transform:scaleX(0.93)">2840</div>
<div class="t" style="left:537.0px;top:4.7px;font-size:11.11px;line-height:11.11px;color:#e8e8e8;transform:scaleX(0.93)">3550</div>
<div class="t" style="left:587.0px;top:4.7px;font-size:11.11px;line-height:11.11px;color:#e8e8e8;transform:scaleX(0.93)">4260</div>
<div class="t" style="left:637.0px;top:4.7px;font-size:11.11px;line-height:11.11px;color:#e8e8e8;transform:scaleX(0.93)">4970</div>
<div class="t" style="left:687.0px;top:4.7px;font-size:11.11px;line-height:11.11px;color:#e8e8e8;transform:scaleX(0.93)">5680</div>
<div class="t" style="left:737.0px;top:4.7px;font-size:11.11px;line-height:11.11px;color:#e8e8e8;transform:scaleX(0.93)">6390</div>
<div class="t" style="left:787.0px;top:4.7px;font-size:11.11px;line-height:11.11px;color:#e8e8e8;transform:scaleX(0.93)">7100</div>
<div class="t" style="left:837.0px;top:4.7px;font-size:11.11px;line-height:11.11px;color:#e8e8e8;transform:scaleX(0.93)">7810</div>
<div class="t" style="left:887.0px;top:4.7px;font-size:11.11px;line-height:11.11px;color:#e8e8e8;transform:scaleX(0.93)">8520</div>
<div class="t" style="left:937.0px;top:4.7px;font-size:11.11px;line-height:11.11px;color:#e8e8e8;transform:scaleX(0.93)">9230</div>
<div class="t" style="left:987.0px;top:4.7px;font-size:11.11px;line-height:11.11px;color:#e8e8e8;transform:scaleX(0.93)">9940</div>
<div class="t" style="left:1037.0px;top:4.7px;font-size:11.11px;line-height:11.11px;color:#e8e8e8;transform:scaleX(0.93)">10650</div>
<div class="t" style="left:1087.0px;top:4.7px;font-size:11.11px;line-height:11.11px;color:#e8e8e8;transform:scaleX(0.93)">11360</div>
<div class="t" style="left:1137.0px;top:4.7px;font-size:11.11px;line-height:11.11px;color:#e8e8e8;transform:scaleX(0.93)">12070</div>
<div class="t" style="left:1187.0px;top:4.7px;font-size:11.11px;line-height:11.11px;color:#e8e8e8;transform:scaleX(0.93)">12780</div>
<div class="t" style="left:1237.0px;top:4.7px;font-size:11.11px;line-height:11.11px;color:#e8e8e8;transform:scaleX(0.93)">13490</div>
<div class="t" style="left:1287.0px;top:4.7px;font-size:11.11px;line-height:11.11px;color:#e8e8e8;transform:scaleX(0.93)">14200</div>
<div class="t" style="left:1337.0px;top:4.7px;font-size:11.11px;line-height:11.11px;color:#e8e8e8;transform:scaleX(0.93)">14910</div>
<div class="t" style="left:1387.0px;top:4.7px;font-size:11.11px;line-height:11.11px;color:#e8e8e8;transform:scaleX(0.93)">15620</div>
<div class="t" style="left:1437.0px;top:4.7px;font-size:11.11px;line-height:11.11px;color:#e8e8e8;transform:scaleX(0.93)">16330</div>
<div class="t" style="left:1487.0px;top:4.7px;font-size:11.11px;line-height:11.11px;color:#e8e8e8;transform:scaleX(0.93)">17040</div>
<div class="t" style="left:1537.0px;top:4.7px;font-size:11.11px;line-height:11.11px;color:#e8e8e8;transform:scaleX(0.93)">17750</div>
<div class="t" style="left:1587.0px;top:4.7px;font-size:11.11px;line-height:11.11px;color:#e8e8e8;transform:scaleX(0.93)">18460</div>
<div class="t" style="left:1637.0px;top:4.7px;font-size:11.11px;line-height:11.11px;color:#e8e8e8;transform:scaleX(0.93)">19170</div>
<div class="t" style="left:1687.0px;top:4.7px;font-size:11.11px;line-height:11.11px;color:#e8e8e8;transform:scaleX(0.93)">19880</div>
<div class="t" style="left:1737.0px;top:4.7px;font-size:11.11px;line-height:11.11px;color:#e8e8e8;transform:scaleX(0.93)">20590</div>
<div class="t" style="left:1787.0px;top:4.7px;font-size:11.11px;line-height:11.11px;color:#e8e8e8;transform:scaleX(0.93)">21300</div>
</div>
<svg style="left:0;top:0" width="1920" height="1080"><path d="M60 154.5H64M60 159.5H64M60 164.5H64M60 169.5H64M56 174.5H64M60 179.5H64M60 184.5H64M60 189.5H64M60 194.5H64M52 199.5H64M60 204.5H64M60 209.5H64M60 214.5H64M60 219.5H64M56 224.5H64M60 229.5H64M60 234.5H64M60 239.5H64M60 244.5H64M52 249.5H64M60 254.5H64M60 259.5H64M60 264.5H64M60 269.5H64M56 274.5H64M60 279.5H64M60 284.5H64M60 289.5H64M60 294.5H64M52 299.5H64M60 304.5H64M60 309.5H64M60 314.5H64M60 319.5H64M56 324.5H64M60 329.5H64M60 334.5H64M60 339.5H64M60 344.5H64M52 349.5H64M60 354.5H64M60 359.5H64M60 364.5H64M60 369.5H64M56 374.5H64M60 379.5H64M60 384.5H64M60 389.5H64M60 394.5H64M52 399.5H64M60 404.5H64M60 409.5H64M60 414.5H64M60 419.5H64M56 424.5H64M60 429.5H64M60 434.5H64M60 439.5H64M60 444.5H64M52 449.5H64M60 454.5H64M60 459.5H64M60 464.5H64M60 469.5H64M56 474.5H64M60 479.5H64M60 484.5H64M60 489.5H64M60 494.5H64M52 499.5H64M60 504.5H64M60 509.5H64M60 514.5H64M60 519.5H64M56 524.5H64M60 529.5H64M60 534.5H64M60 539.5H64M60 544.5H64M52 549.5H64M60 554.5H64M60 559.5H64M60 564.5H64M60 569.5H64M56 574.5H64M60 579.5H64M60 584.5H64M60 589.5H64M60 594.5H64M52 599.5H64M60 604.5H64M60 609.5H64M60 614.5H64M60 619.5H64M56 624.5H64M60 629.5H64M60 634.5H64M60 639.5H64M60 644.5H64M52 649.5H64M60 654.5H64M60 659.5H64M60 664.5H64M60 669.5H64M56 674.5H64M60 679.5H64M60 684.5H64M60 689.5H64M60 694.5H64M52 699.5H64M60 704.5H64M60 709.5H64M60 714.5H64M60 719.5H64M56 724.5H64M60 729.5H64M60 734.5H64M60 739.5H64M60 744.5H64M52 749.5H64M60 754.5H64M60 759.5H64M60 764.5H64M60 769.5H64M56 774.5H64M60 779.5H64M60 784.5H64M60 789.5H64M60 794.5H64M52 799.5H64M60 804.5H64M60 809.5H64M60 814.5H64M60 819.5H64M56 824.5H64M60 829.5H64M60 834.5H64M60 839.5H64M60 844.5H64M52 849.5H64M60 854.5H64M60 859.5H64M60 864.5H64M60 869.5H64M56 874.5H64M60 879.5H64M60 884.5H64M60 889.5H64M60 894.5H64M52 899.5H64M60 904.5H64M60 909.5H64M60 914.5H64M60 919.5H64M56 924.5H64M60 929.5H64M60 934.5H64" stroke="#9a9a9a" stroke-width="1"/></svg>
<div class="ab" style="left:43px;top:153px;width:21px;height:784px;overflow:hidden">
<div class="t" style="left:10.0px;top:779.8px;font-size:11.11px;line-height:11.11px;color:#e8e8e8;transform:translate(-50%,-50%) rotate(-90deg) scaleX(0.93);transform-origin:50% 50%">-5680</div>
<div class="t" style="left:10.0px;top:729.8px;font-size:11.11px;line-height:11.11px;color:#e8e8e8;transform:translate(-50%,-50%) rotate(-90deg) scaleX(0.93);transform-origin:50% 50%">-4970</div>
<div class="t" style="left:10.0px;top:679.8px;font-size:11.11px;line-height:11.11px;color:#e8e8e8;transform:translate(-50%,-50%) rotate(-90deg) scaleX(0.93);transform-origin:50% 50%">-4260</div>
<div class="t" style="left:10.0px;top:629.8px;font-size:11.11px;line-height:11.11px;color:#e8e8e8;transform:translate(-50%,-50%) rotate(-90deg) scaleX(0.93);transform-origin:50% 50%">-3550</div>
<div class="t" style="left:10.0px;top:579.8px;font-size:11.11px;line-height:11.11px;color:#e8e8e8;transform:translate(-50%,-50%) rotate(-90deg) scaleX(0.93);transform-origin:50% 50%">-2840</div>
<div class="t" style="left:10.0px;top:529.8px;font-size:11.11px;line-height:11.11px;color:#e8e8e8;transform:translate(-50%,-50%) rotate(-90deg) scaleX(0.93);transform-origin:50% 50%">-2130</div>
<div class="t" style="left:10.0px;top:479.8px;font-size:11.11px;line-height:11.11px;color:#e8e8e8;transform:translate(-50%,-50%) rotate(-90deg) scaleX(0.93);transform-origin:50% 50%">-1420</div>
<div class="t" style="left:10.0px;top:432.7px;font-size:11.11px;line-height:11.11px;color:#e8e8e8;transform:translate(-50%,-50%) rotate(-90deg) scaleX(0.93);transform-origin:50% 50%">-710</div>
<div class="t" style="left:10.0px;top:390.1px;font-size:11.11px;line-height:11.11px;color:#e8e8e8;transform:translate(-50%,-50%) rotate(-90deg) scaleX(0.93);transform-origin:50% 50%">0</div>
<div class="t" style="left:10.0px;top:334.4px;font-size:11.11px;line-height:11.11px;color:#e8e8e8;transform:translate(-50%,-50%) rotate(-90deg) scaleX(0.93);transform-origin:50% 50%">710</div>
<div class="t" style="left:10.0px;top:281.5px;font-size:11.11px;line-height:11.11px;color:#e8e8e8;transform:translate(-50%,-50%) rotate(-90deg) scaleX(0.93);transform-origin:50% 50%">1420</div>
<div class="t" style="left:10.0px;top:231.5px;font-size:11.11px;line-height:11.11px;color:#e8e8e8;transform:translate(-50%,-50%) rotate(-90deg) scaleX(0.93);transform-origin:50% 50%">2130</div>
<div class="t" style="left:10.0px;top:181.5px;font-size:11.11px;line-height:11.11px;color:#e8e8e8;transform:translate(-50%,-50%) rotate(-90deg) scaleX(0.93);transform-origin:50% 50%">2840</div>
<div class="t" style="left:10.0px;top:131.5px;font-size:11.11px;line-height:11.11px;color:#e8e8e8;transform:translate(-50%,-50%) rotate(-90deg) scaleX(0.93);transform-origin:50% 50%">3550</div>
<div class="t" style="left:10.0px;top:81.5px;font-size:11.11px;line-height:11.11px;color:#e8e8e8;transform:translate(-50%,-50%) rotate(-90deg) scaleX(0.93);transform-origin:50% 50%">4260</div>
<div class="t" style="left:10.0px;top:31.5px;font-size:11.11px;line-height:11.11px;color:#e8e8e8;transform:translate(-50%,-50%) rotate(-90deg) scaleX(0.93);transform-origin:50% 50%">4970</div>
<div class="t" style="left:10.0px;top:-18.5px;font-size:11.11px;line-height:11.11px;color:#e8e8e8;transform:translate(-50%,-50%) rotate(-90deg) scaleX(0.93);transform-origin:50% 50%">5680</div>
</div>
<div class="ab" style="left:64px;top:153px;width:1838px;height:768px;background:#434343;"></div>
<div class="ab" style="left:348px;top:444px;width:207px;height:106px;background:#ffffff;border:1.5px solid #0d0d3a;border-right:none"></div>
<div class="ab" style="left:418px;top:444px;width:1.5px;height:106px;background:#0d0d3a;"></div>
<div class="t" style="left:352.0px;top:421.4px;font-size:13.19px;line-height:13.19px;color:#ececec;transform:scaleX(1.039);">Artboard 1</div>
<div class="t" style="left:466.0px;top:421.4px;font-size:13.19px;line-height:13.19px;color:#ececec;transform:scaleX(1.055);">Artboard 2</div>
<div class="ab" style="left:1353px;top:170px;width:224px;height:10px;background:#3a3a3a;border-left:1px solid #2e2e2e"></div>
<div class="ab" style="left:1389px;top:171px;width:48px;height:10px;background:#434343;border:1px solid #555;border-bottom:none"></div>
<div class="ab" style="left:1556px;top:177px;width:12px;height:1.5px;background:#cfcfcf;"></div>
<svg style="left:1354px;top:176px;" width="9" height="4" viewBox="0 0 9 4"><ellipse cx="4.5" cy="4.5" rx="4.2" ry="3.5" fill="#9a9a9a"/></svg>
<svg style="left:1366px;top:178px;" width="7" height="2" viewBox="0 0 7 2"><path d="M0 0 L1 2 M3 0 L4 2" stroke="#ccc" stroke-width="1"/></svg>
<div class="ab" style="left:1379px;top:175px;width:1.5px;height:5px;background:#777;"></div>
<div class="ab" style="left:1383px;top:175px;width:1.5px;height:5px;background:#777;"></div>
<div class="ab" style="left:1395px;top:178.5px;width:3px;height:1.5px;background:#ddd;"></div>
<div class="ab" style="left:1405px;top:177.5px;width:5px;height:2.5px;background:#eee;"></div>
<div class="ab" style="left:1418px;top:178.5px;width:2px;height:1.5px;background:#ddd;"></div>
<div class="ab" style="left:1422px;top:178px;width:2px;height:2px;background:#ddd;"></div>
<div class="ab" style="left:1354px;top:180px;width:250px;height:530px;background:#434343;border-right:1px solid #2e2e2e;border-bottom:1px solid #2e2e2e"></div>
<div class="ab" style="left:1354px;top:180px;width:250px;height:20px;background:#393939;border-bottom:1px solid #2e2e2e;border-top:1px solid #2e2e2e"></div>
<div class="ab" style="left:1369px;top:227px;width:15px;height:15px;background:#6b6b6b;border:1px solid #2a2a2a"></div>
<div class="t" style="left:1388.0px;top:228.5px;font-size:12.50px;line-height:12.50px;color:#ececec;transform:scaleX(0.943);">Print To File</div>
<div class="ab" style="left:1369px;top:260px;width:120px;height:20px;background:#6e6e6e;"></div>
<div class="t" style="left:1410.5px;top:263.5px;font-size:12.50px;line-height:12.50px;color:#f0f0f0;transform:scaleX(0.924);">Printer</div>
<div class="ab" style="left:1369px;top:295px;width:120px;height:20px;background:#6e6e6e;"></div>
<div class="t" style="left:1402.0px;top:298.5px;font-size:12.50px;line-height:12.50px;color:#f0f0f0;transform:scaleX(0.941);">Overrides</div>
<div class="ab" style="left:1354px;top:339px;width:233px;height:319px;background:#393939;border-top:2px solid #4a4a4a;border-right:2px solid #4a4a4a;border-bottom:2px solid #4a4a4a"></div>
<div class="ab" style="left:1354px;top:331px;width:139px;height:19px;background:#6b6b6b;"></div>
<div class="ab" style="left:1370px;top:335px;width:1px;height:11px;background:#9a9a9a;"></div>
<div class="ab" style="left:1434px;top:335px;width:1px;height:11px;background:#9a9a9a;"></div>
<div class="t" style="left:1384.0px;top:334.5px;font-size:12.50px;line-height:12.50px;color:#f0f0f0;transform:scaleX(0.979);">Image</div>
<div class="t" style="left:1449.0px;top:334.5px;font-size:12.50px;line-height:12.50px;color:#f0f0f0;transform:scaleX(0.971);">Color</div>
<div class="ab" style="left:1354px;top:408px;width:40px;height:19px;background:#6e6e6e;"></div>
<svg style="left:1377px;top:414px;" width="13" height="8" viewBox="0 0 13 8"><path d="M1 1 L6.5 6.5 L12 1" fill="none" stroke="#e8e8e8" stroke-width="1.5"/></svg>
<div class="ab" style="left:1354px;top:448px;width:40px;height:19px;background:#6e6e6e;"></div>
<svg style="left:1377px;top:454px;" width="13" height="8" viewBox="0 0 13 8"><path d="M1 1 L6.5 6.5 L12 1" fill="none" stroke="#e8e8e8" stroke-width="1.5"/></svg>
<div class="ab" style="left:1404px;top:448px;width:70px;height:19px;background:#6e6e6e;"></div>
<div class="t" style="left:1421.0px;top:451.5px;font-size:12.50px;line-height:12.50px;color:#f0f0f0;transform:scaleX(0.892);">Select</div>
<div class="ab" style="left:1354px;top:488px;width:40px;height:19px;background:#353535;"></div>
<div class="ab" style="left:1410px;top:505px;width:15px;height:15px;background:#6b6b6b;border:1px solid #2a2a2a"></div>
<div class="t" style="left:1428.0px;top:506.5px;font-size:12.50px;line-height:12.50px;color:#ececec;transform:scaleX(0.947);">Print Grid</div>
<div class="ab" style="left:1410px;top:535px;width:15px;height:15px;background:#6b6b6b;border:1px solid #2a2a2a"></div>
<div class="t" style="left:1428.0px;top:536.5px;font-size:12.50px;line-height:12.50px;color:#ececec;transform:scaleX(0.941);">Print Guidelines</div>
<div class="ab" style="left:1410px;top:565px;width:15px;height:15px;background:#6b6b6b;border:1px solid #2a2a2a"></div>
<div class="t" style="left:1428.0px;top:566.5px;font-size:12.50px;line-height:12.50px;color:#ececec;transform:scaleX(0.964);">Print Margins</div>
<div class="ab" style="left:1410px;top:595px;width:15px;height:15px;background:#6b6b6b;border:1px solid #2a2a2a"></div>
<div class="t" style="left:1428.0px;top:596.5px;font-size:12.50px;line-height:12.50px;color:#ececec;transform:scaleX(0.912);">Print Slices</div>
<div class="ab" style="left:1354px;top:675px;width:100px;height:20px;background:#6e6e6e;"></div>
<div class="t" style="left:1383.0px;top:678.5px;font-size:12.50px;line-height:12.50px;color:#f0f0f0;transform:scaleX(0.900);">Cancel</div>
<div class="ab" style="left:1484px;top:675px;width:100px;height:20px;background:#2f5fcc;"></div>
<div class="t" style="left:1523.5px;top:678.5px;font-size:12.50px;line-height:12.50px;color:#ffffff;transform:scaleX(0.876);">Ok</div>
<div class="ab" style="left:554px;top:171px;width:800px;height:602px;background:#434343;border:1px solid #2e2e2e"></div>
<div class="ab" style="left:554px;top:171px;width:799px;height:20px;background:#393939;border-bottom:1px solid #2e2e2e"></div>
<div class="t" style="left:909.0px;top:174.4px;font-size:13.19px;line-height:13.19px;color:#f0f0f0;transform:scaleX(0.909);">Select Artboards</div>
<div class="t" style="left:574.0px;top:211.4px;font-size:13.19px;line-height:13.19px;color:#ececec;transform:scaleX(0.909);">Artboards</div>
<div class="ab" style="left:575px;top:233px;width:448px;height:84px;background:#1c1c1c;"></div>
<div class="ab" style="left:576px;top:234px;width:88px;height:82px;background:#363636;"></div>
<div class="ab" style="left:579px;top:235px;width:82px;height:58px;background:#e3e3e3;border:1px solid #b5b5b5"></div>
<div class="ab" style="left:580px;top:276px;width:15px;height:15px;background:#d6d6d6;border:1px solid #555;border-radius:4px"></div>
<div class="ab" style="left:666px;top:234px;width:88px;height:82px;background:#363636;"></div>
<div class="ab" style="left:669px;top:235px;width:82px;height:58px;background:#e3e3e3;border:1px solid #b5b5b5"></div>
<div class="ab" style="left:670px;top:276px;width:15px;height:15px;background:#d6d6d6;border:1px solid #555;border-radius:4px"></div>
<div class="ab" style="left:756px;top:234px;width:87px;height:82px;background:#363636;"></div>
<div class="ab" style="left:759px;top:235px;width:81px;height:58px;background:#e3e3e3;border:1px solid #b5b5b5"></div>
<div class="ab" style="left:760px;top:276px;width:15px;height:15px;background:#d6d6d6;border:1px solid #555;border-radius:4px"></div>
<div class="ab" style="left:845px;top:234px;width:87px;height:82px;background:#363636;"></div>
<div class="ab" style="left:848px;top:235px;width:81px;height:58px;background:#e3e3e3;border:1px solid #b5b5b5"></div>
<div class="ab" style="left:849px;top:276px;width:15px;height:15px;background:#d6d6d6;border:1px solid #555;border-radius:4px"></div>
<div class="ab" style="left:934px;top:234px;width:88px;height:82px;background:#363636;"></div>
<div class="ab" style="left:937px;top:235px;width:82px;height:58px;background:#e3e3e3;border:1px solid #b5b5b5"></div>
<div class="ab" style="left:938px;top:276px;width:15px;height:15px;background:#d6d6d6;border:1px solid #555;border-radius:4px"></div>
<svg style="left:560px;top:250px;" width="100" height="160" viewBox="0 0 100 160"><path d="M23.6 147.5 L60.2 34.2 L57.2 29.2 L69.4 15.1 L72.1 33.3 L66.2 36.2 L25.0 147.8 Z" fill="#f0353a" stroke="#f0353a" stroke-width="0.6" stroke-linejoin="round"/></svg>
<div class="ab" style="left:1115px;top:228px;width:8px;height:486px;background:#9a9a9a;border-radius:4px"></div>
<div class="ab" style="left:1149px;top:230px;width:15px;height:15px;background:#6b6b6b;border:1px solid #2a2a2a"></div>
<div class="t" style="left:1168.0px;top:231.5px;font-size:12.50px;line-height:12.50px;color:#ececec;transform:scaleX(0.924);">List View</div>
<div class="ab" style="left:1149px;top:270px;width:15px;height:15px;background:#6b6b6b;border:1px solid #2a2a2a"></div>
<div class="t" style="left:1168.0px;top:271.5px;font-size:12.50px;line-height:12.50px;color:#ececec;transform:scaleX(0.991);">Print All</div>
<div class="t" style="left:608.0px;top:736.5px;font-size:12.50px;line-height:12.50px;color:#ececec;transform:scaleX(0.922);">Preview</div>
<div class="ab" style="left:655px;top:732px;width:60px;height:20px;background:#2e2e2e;"></div>
<div class="t" style="left:659.0px;top:736.5px;font-size:12.50px;line-height:12.50px;color:#f0f0f0;transform:scaleX(0.863);">81.5</div>
<div class="ab" style="left:715px;top:732px;width:14px;height:20px;background:#5a5a5a;"></div>
<svg style="left:715px;top:732px;" width="14" height="20" viewBox="0 0 14 20"><path d="M3 7.5 L7 3.5 L11 7.5 M3 12.5 L7 16.5 L11 12.5" fill="none" stroke="#e0e0e0" stroke-width="1.4"/></svg>
<div class="ab" style="left:1144px;top:732px;width:90px;height:20px;background:#6e6e6e;"></div>
<div class="t" style="left:1170.0px;top:735.5px;font-size:12.50px;line-height:12.50px;color:#f0f0f0;transform:scaleX(0.900);">Cancel</div>
<div class="ab" style="left:1244px;top:732px;width:90px;height:20px;background:#2f5fcc;"></div>
<div class="t" style="left:1280.5px;top:735.5px;font-size:12.50px;line-height:12.50px;color:#ffffff;transform:scaleX(0.876);">Ok</div>
<div class="ab" style="left:64px;top:921px;width:1616px;height:16px;background:#434343;"></div>
<div class="ab" style="left:65px;top:922px;width:70px;height:15px;background:#6e6e6e;"></div>
<div class="t" style="left:73.0px;top:923.6px;font-size:11.81px;line-height:11.81px;color:#f0f0f0;transform:scaleX(0.866);">5.34%</div>
<svg style="left:118px;top:926px;" width="12" height="7" viewBox="0 0 12 7"><path d="M1 1 L6 6 L11 1" fill="none" stroke="#f0f0f0" stroke-width="1.5"/></svg>
<div class="ab" style="left:137px;top:922px;width:60px;height:15px;background:#6e6e6e;"></div>
<div class="t" style="left:145.0px;top:923.6px;font-size:11.81px;line-height:11.81px;color:#f0f0f0;transform:scaleX(0.852);">0.0°</div>
<svg style="left:180px;top:926px;" width="12" height="7" viewBox="0 0 12 7"><path d="M1 1 L6 6 L11 1" fill="none" stroke="#f0f0f0" stroke-width="1.5"/></svg>
<div class="ab" style="left:231px;top:922px;width:56px;height:15px;background:#6e6e6e;"></div>
<div class="t" style="left:240.0px;top:923.6px;font-size:11.81px;line-height:11.81px;color:#f0f0f0;transform:scaleX(0.762);">1</div>
<svg style="left:270px;top:926px;" width="12" height="7" viewBox="0 0 12 7"><path d="M1 1 L6 6 L11 1" fill="none" stroke="#f0f0f0" stroke-width="1.5"/></svg>
<div class="ab" style="left:321px;top:922px;width:180px;height:15px;background:#6e6e6e;"></div>
<div class="t" style="left:328.0px;top:923.6px;font-size:11.81px;line-height:11.81px;color:#f0f0f0;">No Selection</div>
<svg style="left:484px;top:926px;" width="12" height="7" viewBox="0 0 12 7"><path d="M1 1 L6 6 L11 1" fill="none" stroke="#f0f0f0" stroke-width="1.5"/></svg>
<svg style="left:201px;top:923px;" width="12" height="13" viewBox="0 0 12 13"><rect x="0.5" y="1.5" width="2" height="10" fill="#eee"/><path d="M11 1.5 V11.5 L3.5 6.5 Z" fill="#eee"/></svg>
<svg style="left:218px;top:924px;" width="9" height="11" viewBox="0 0 9 11"><path d="M8 0.5 V10.5 L0.5 5.5 Z" fill="#eee"/></svg>
<svg style="left:291px;top:924px;" width="8" height="11" viewBox="0 0 8 11"><path d="M0.5 0.5 V10.5 L7.5 5.5 Z" fill="#eee"/></svg>
<svg style="left:305px;top:923px;" width="11" height="13" viewBox="0 0 11 13"><path d="M0.5 1.5 V11.5 L7.5 6.5 Z" fill="#eee"/><rect x="8" y="1.5" width="2" height="10" fill="#eee"/></svg>
<div class="ab" style="left:503px;top:922px;width:16px;height:15px;background:#e03b2e;border-radius:2px"></div>
<svg style="left:503px;top:922px;" width="16" height="15" viewBox="0 0 16 15"><path d="M4 3 H12 M8 4 V11 M5 8 L8 11.5 L11 8" fill="none" stroke="#fff" stroke-width="1.5"/></svg>
<svg style="left:525px;top:923px;" width="9" height="13" viewBox="0 0 9 13"><path d="M7.5 1 L1.5 6.5 L7.5 12" fill="none" stroke="#eee" stroke-width="1.6"/></svg>
<div class="ab" style="left:539px;top:922px;width:1141px;height:14px;background:#888888;border-radius:7px 0 0 7px"></div>
<div class="ab" style="left:0px;top:937px;width:1920px;height:4px;background:#262626;"></div>
<div class="ab" style="left:2px;top:941px;width:1677px;height:75px;background:#434343;border:1px solid #505050"></div>
<svg style="left:10px;top:949px;" width="14" height="14" viewBox="0 0 14 14"><circle cx="7" cy="7" r="7" fill="#9a9a9a"/><path d="M4 4 L10 10 M10 4 L4 10" stroke="#111" stroke-width="1.3"/></svg>
<div class="ab" style="left:10px;top:967px;width:14px;height:1.3px;background:#9a9a9a;"></div>
<div class="ab" style="left:10px;top:970.5px;width:14px;height:1.3px;background:#9a9a9a;"></div>
<svg style="left:11px;top:982px;" width="12" height="10" viewBox="0 0 12 10"><path d="M4 1 L1 5 L4 9 M8 1 L11 5 L8 9" fill="none" stroke="#eee" stroke-width="1.3"/></svg>
<svg style="left:12px;top:999px;" width="10" height="10" viewBox="0 0 10 10"><path d="M1 0 V10 M3.5 0 V10 M6 0 V10 M8.5 0 V10" stroke="#bbb" stroke-width="1"/></svg>
<svg style="left:48px;top:957px;" width="44" height="44" viewBox="0 0 44 44"><rect x="0" y="0" width="7" height="7" fill="#8c8c8c"/><rect x="18" y="0" width="7" height="7" fill="#8c8c8c"/><rect x="36" y="0" width="7" height="7" fill="#8c8c8c"/><rect x="0" y="18" width="7" height="7" fill="#8c8c8c"/><rect x="18" y="18" width="7" height="7" fill="#8c8c8c"/><rect x="36" y="18" width="7" height="7" fill="#8c8c8c"/><rect x="0" y="36" width="7" height="7" fill="#8c8c8c"/><rect x="18" y="36" width="7" height="7" fill="#8c8c8c"/><rect x="36" y="36" width="7" height="7" fill="#8c8c8c"/><path d="M9 3.5 H16 M27 3.5 H34 M9 39.5 H16 M27 39.5 H34 M3.5 9 V16 M3.5 27 V34 M39.5 9 V16 M39.5 27 V34" stroke="#8c8c8c" stroke-width="1.3"/></svg>
<div class="ab" style="left:130px;top:954px;width:80px;height:20px;background:#2e2e2e;"></div>
<div class="t" style="left:134.0px;top:958.6px;font-size:11.81px;line-height:11.81px;color:#a8a8a8;transform:scaleX(1.016);">0.0 pt</div>
<div class="ab" style="left:250px;top:954px;width:68px;height:20px;background:#2e2e2e;"></div>
<div class="t" style="left:254.0px;top:958.6px;font-size:11.81px;line-height:11.81px;color:#a8a8a8;transform:scaleX(1.016);">0.0 pt</div>
<svg style="left:321px;top:957px;" width="15" height="15" viewBox="0 0 15 15"><circle cx="7.5" cy="7.5" r="6.5" fill="none" stroke="#aaa" stroke-width="1.2"/></svg>
<div class="ab" style="left:408px;top:954px;width:75px;height:20px;background:#2e2e2e;"></div>
<div class="t" style="left:412.0px;top:958.6px;font-size:11.81px;line-height:11.81px;color:#a8a8a8;transform:scaleX(0.960);">100%</div>
<div class="ab" style="left:522px;top:954px;width:58px;height:20px;background:#2e2e2e;"></div>
<div class="t" style="left:526.0px;top:958.6px;font-size:11.81px;line-height:11.81px;color:#a8a8a8;transform:scaleX(0.886);">0°</div>
<div class="ab" style="left:579px;top:954px;width:13px;height:20px;background:#5a5a5a;"></div>
<svg style="left:579px;top:955px;" width="13" height="18" viewBox="0 0 13 18"><path d="M3 6.5 L6.5 3 L10 6.5 M3 11.5 L6.5 15 L10 11.5" fill="none" stroke="#999" stroke-width="1.2"/></svg>
<div class="ab" style="left:130px;top:984px;width:80px;height:20px;background:#2e2e2e;"></div>
<div class="t" style="left:134.0px;top:988.6px;font-size:11.81px;line-height:11.81px;color:#a8a8a8;transform:scaleX(1.016);">0.0 pt</div>
<div class="ab" style="left:250px;top:984px;width:68px;height:20px;background:#2e2e2e;"></div>
<div class="t" style="left:254.0px;top:988.6px;font-size:11.81px;line-height:11.81px;color:#a8a8a8;transform:scaleX(1.016);">0.0 pt</div>
<svg style="left:321px;top:987px;" width="15" height="15" viewBox="0 0 15 15"><circle cx="7.5" cy="7.5" r="6.5" fill="none" stroke="#aaa" stroke-width="1.2"/></svg>
<div class="ab" style="left:408px;top:984px;width:75px;height:20px;background:#2e2e2e;"></div>
<div class="t" style="left:412.0px;top:988.6px;font-size:11.81px;line-height:11.81px;color:#a8a8a8;transform:scaleX(0.960);">100%</div>
<div class="ab" style="left:522px;top:984px;width:58px;height:20px;background:#2e2e2e;"></div>
<div class="t" style="left:526.0px;top:988.6px;font-size:11.81px;line-height:11.81px;color:#a8a8a8;transform:scaleX(0.886);">0°</div>
<div class="ab" style="left:579px;top:984px;width:13px;height:20px;background:#5a5a5a;"></div>
<svg style="left:579px;top:985px;" width="13" height="18" viewBox="0 0 13 18"><path d="M3 6.5 L6.5 3 L10 6.5 M3 11.5 L6.5 15 L10 11.5" fill="none" stroke="#999" stroke-width="1.2"/></svg>
<svg style="left:108px;top:958px;" width="13" height="12" viewBox="0 0 13 12"><path d="M1 0 V12 M3 6 H11 M8 2.5 L11.5 6 L8 9.5" fill="none" stroke="#8c8c8c" stroke-width="1.4"/></svg>
<svg style="left:108px;top:988px;" width="13" height="13" viewBox="0 0 13 13"><path d="M0 12 H13 M6.5 10 V2 M3 5.5 L6.5 2 L10 5.5" fill="none" stroke="#8c8c8c" stroke-width="1.4"/></svg>
<svg style="left:229px;top:957px;" width="11" height="14" viewBox="0 0 11 14"><rect x="0.5" y="0.5" width="10" height="13" rx="1" fill="none" stroke="#8c8c8c"/><path d="M2.5 7 H8.5" stroke="#8c8c8c"/></svg>
<svg style="left:229px;top:987px;" width="11" height="14" viewBox="0 0 11 14"><rect x="0.5" y="0.5" width="14" height="11" rx="1" fill="none" stroke="#8c8c8c"/><path d="M7.5 3 V9" stroke="#8c8c8c"/></svg>
<svg style="left:345px;top:971px;" width="9" height="17" viewBox="0 0 9 17"><rect x="1" y="1" width="6" height="8" rx="3" fill="none" stroke="#ccc" stroke-width="1.3"/><rect x="2" y="8" width="6" height="8" rx="3" fill="none" stroke="#ccc" stroke-width="1.3"/></svg>
<svg style="left:385px;top:958px;" width="15" height="12" viewBox="0 0 15 12"><path d="M0.7 0 V12 M14.3 0 V12 M2 6 H13 M5 3 L2 6 L5 9 M10 3 L13 6 L10 9" fill="none" stroke="#8c8c8c" stroke-width="1.3"/></svg>
<svg style="left:388px;top:987px;" width="10" height="15" viewBox="0 0 10 15"><path d="M0 0.7 H10 M0 14.3 H10 M5 2 V13 M2 5 L5 2 L8 5 M2 10 L5 13 L8 10" fill="none" stroke="#8c8c8c" stroke-width="1.3"/></svg>
<svg style="left:500px;top:957px;" width="14" height="14" viewBox="0 0 14 14"><path d="M1 1 H13 L1 13 H13 M4 1 L1 4 M13 10 L10 13" fill="none" stroke="#666" stroke-width="1.3"/></svg>
<svg style="left:500px;top:987px;" width="14" height="14" viewBox="0 0 14 14"><path d="M2 1 V13 L12 1 V13" fill="none" stroke="#666" stroke-width="1.3"/></svg>
<svg style="left:603px;top:957px;" width="15" height="14" viewBox="0 0 15 14"><path d="M1 13 H15 M1 13 L11 2 M6 8 A6 6 0 0 1 8 13" fill="none" stroke="#666" stroke-width="1.2"/></svg>
<div class="ab" style="left:626px;top:954px;width:77px;height:20px;background:#2e2e2e;"></div>
<div class="t" style="left:630.0px;top:958.6px;font-size:11.81px;line-height:11.81px;color:#a8a8a8;transform:scaleX(0.886);">0°</div>
<div class="ab" style="left:703px;top:954px;width:13px;height:20px;background:#5a5a5a;"></div>
<svg style="left:703px;top:955px;" width="13" height="18" viewBox="0 0 13 18"><path d="M3 6.5 L6.5 3 L10 6.5 M3 11.5 L6.5 15 L10 11.5" fill="none" stroke="#999" stroke-width="1.2"/></svg>
<div class="t" style="left:729.0px;top:958.5px;font-size:12.50px;line-height:12.50px;color:#8c8c8c;transform:scaleX(0.806);">CX</div>
<div class="ab" style="left:750px;top:954px;width:80px;height:20px;background:#2e2e2e;"></div>
<div class="t" style="left:754.0px;top:958.6px;font-size:11.81px;line-height:11.81px;color:#8c8c8c;transform:scaleX(1.016);">0.0 pt</div>
<div class="t" style="left:850.0px;top:958.5px;font-size:12.50px;line-height:12.50px;color:#f0f0f0;transform:scaleX(0.806);">CX</div>
<div class="ab" style="left:871px;top:954px;width:80px;height:20px;background:#2e2e2e;"></div>
<div class="t" style="left:875.0px;top:958.6px;font-size:11.81px;line-height:11.81px;color:#f4f4f4;transform:scaleX(0.991);">0.0 mm</div>
<div class="ab" style="left:607px;top:987px;width:14px;height:15px;background:#6b6b6b;border:1px solid #2a2a2a"></div>
<div class="t" style="left:625.0px;top:988.5px;font-size:12.50px;line-height:12.50px;color:#ececec;transform:scaleX(0.916);">Transform Each</div>
<div class="ab" style="left:0px;top:1015px;width:1920px;height:5px;background:#262626;"></div>
<div class="ab" style="left:2px;top:1020px;width:1678px;height:17px;background:#434343;"></div>
<svg style="left:12px;top:1022px;" width="7" height="14" viewBox="0 0 7 14"><rect x="0" y="0" width="2" height="2" fill="#aaa"/><rect x="0" y="5.5" width="2" height="2" fill="#aaa"/><rect x="0" y="11" width="2" height="2" fill="#aaa"/><rect x="4.5" y="0" width="2" height="2" fill="#aaa"/><rect x="4.5" y="5.5" width="2" height="2" fill="#aaa"/><rect x="4.5" y="11" width="2" height="2" fill="#aaa"/></svg>
<svg style="left:27px;top:1021px;" width="17" height="16" viewBox="0 0 17 16"><circle cx="3" cy="3.5" r="2.3" fill="none" stroke="#ddd" stroke-width="1.3"/><circle cx="3" cy="12" r="2.3" fill="none" stroke="#ddd" stroke-width="1.3"/><path d="M7 2 H16 M7 5 H16 M7 10.5 H16 M7 13.5 H16" stroke="#ddd" stroke-width="1.3"/></svg>
<div class="ab" style="left:46px;top:1021px;width:36px;height:16px;background:#ffffff;"></div>
<svg style="left:46px;top:1021px;" width="18" height="16" viewBox="0 0 18 16"><path d="M2 15 L16 2" stroke="#f02020" stroke-width="1.2"/></svg>
<svg style="left:64px;top:1021px;" width="18" height="16" viewBox="0 0 18 16"><circle cx="9" cy="8" r="5" fill="none" stroke="#222" stroke-width="1.1"/><circle cx="9" cy="8" r="2.8" fill="none" stroke="#222" stroke-width="1.1"/><path d="M9 0 V16 M1 8 H17" stroke="#222" stroke-width="0.9"/></svg>
<svg style="left:0;top:1021px" width="1920" height="16"><rect x="82" y="0" width="18" height="16" fill="#000000"/><rect x="100" y="0" width="18" height="16" fill="#ffffff"/><rect x="118" y="0" width="18" height="16" fill="#00ffff"/><rect x="136" y="0" width="18" height="16" fill="#f23cf2"/><rect x="154" y="0" width="18" height="16" fill="#ffff33"/><rect x="172" y="0" width="18" height="16" fill="#ff2200"/><rect x="190" y="0" width="18" height="16" fill="#0af032"/><rect x="208" y="0" width="18" height="16" fill="#1f2eff"/><rect x="226" y="0" width="18" height="16" fill="#ffffff"/><rect x="244" y="0" width="18" height="16" fill="#e6e6e6"/><rect x="262" y="0" width="18" height="16" fill="#cccccc"/><rect x="280" y="0" width="18" height="16" fill="#b3b3b3"/><rect x="298" y="0" width="18" height="16" fill="#a0a0a0"/><rect x="316" y="0" width="18" height="16" fill="#8c8c8c"/><rect x="334" y="0" width="18" height="16" fill="#737373"/><rect x="352" y="0" width="18" height="16" fill="#5c5c5c"/><rect x="370" y="0" width="18" height="16" fill="#444444"/><rect x="388" y="0" width="18" height="16" fill="#1f1f1f"/><rect x="406" y="0" width="18" height="16" fill="#000000"/><rect x="424" y="0" width="18" height="16" fill="#0a0f8c"/><rect x="442" y="0" width="18" height="16" fill="#008c1e"/><rect x="460" y="0" width="18" height="16" fill="#008c8c"/><rect x="478" y="0" width="18" height="16" fill="#0a8cff"/><rect x="496" y="0" width="18" height="16" fill="#0af09a"/><rect x="514" y="0" width="18" height="16" fill="#961400"/><rect x="532" y="0" width="18" height="16" fill="#961e96"/><rect x="550" y="0" width="18" height="16" fill="#961ef0"/><rect x="568" y="0" width="18" height="16" fill="#968c1e"/><rect x="586" y="0" width="18" height="16" fill="#9696ff"/><rect x="604" y="0" width="18" height="16" fill="#8cfa32"/><rect x="622" y="0" width="18" height="16" fill="#8cff96"/><rect x="640" y="0" width="18" height="16" fill="#8cffff"/><rect x="658" y="0" width="18" height="16" fill="#f52d8c"/><rect x="676" y="0" width="18" height="16" fill="#ff961e"/><rect x="694" y="0" width="18" height="16" fill="#ff9696"/><rect x="712" y="0" width="18" height="16" fill="#ff96ff"/><rect x="730" y="0" width="18" height="16" fill="#ffff8c"/><rect x="748" y="0" width="18" height="16" fill="#7a4444"/><rect x="766" y="0" width="18" height="16" fill="#ad4a44"/><rect x="784" y="0" width="18" height="16" fill="#ad7a74"/><rect x="802" y="0" width="18" height="16" fill="#dc4a44"/><rect x="820" y="0" width="18" height="16" fill="#dc7a78"/><rect x="838" y="0" width="18" height="16" fill="#dcaaa8"/><rect x="856" y="0" width="18" height="16" fill="#ad7a44"/><rect x="874" y="0" width="18" height="16" fill="#dc7a44"/><rect x="892" y="0" width="18" height="16" fill="#dcaa50"/><rect x="910" y="0" width="18" height="16" fill="#dcaa78"/><rect x="928" y="0" width="18" height="16" fill="#7a7a44"/><rect x="946" y="0" width="18" height="16" fill="#adad44"/><rect x="964" y="0" width="18" height="16" fill="#adad7a"/><rect x="982" y="0" width="18" height="16" fill="#dcdc50"/><rect x="1000" y="0" width="18" height="16" fill="#dcdc7a"/><rect x="1018" y="0" width="18" height="16" fill="#dcdcaa"/><rect x="1036" y="0" width="18" height="16" fill="#74ad44"/><rect x="1054" y="0" width="18" height="16" fill="#6edc50"/><rect x="1072" y="0" width="18" height="16" fill="#aadc50"/><rect x="1090" y="0" width="18" height="16" fill="#aadc7a"/><rect x="1108" y="0" width="18" height="16" fill="#447a44"/><rect x="1126" y="0" width="18" height="16" fill="#2ea644"/><rect x="1144" y="0" width="18" height="16" fill="#17dc44"/><rect x="1162" y="0" width="18" height="16" fill="#74ad7a"/><rect x="1180" y="0" width="18" height="16" fill="#74dc7a"/><rect x="1198" y="0" width="18" height="16" fill="#aad6aa"/><rect x="1216" y="0" width="18" height="16" fill="#2ea67a"/><rect x="1234" y="0" width="18" height="16" fill="#17d67a"/><rect x="1252" y="0" width="18" height="16" fill="#1dd6aa"/><rect x="1270" y="0" width="18" height="16" fill="#6ed6aa"/><rect x="1288" y="0" width="18" height="16" fill="#447a7a"/><rect x="1306" y="0" width="18" height="16" fill="#2ea6aa"/><rect x="1324" y="0" width="18" height="16" fill="#1dd6dc"/><rect x="1342" y="0" width="18" height="16" fill="#74adaa"/><rect x="1360" y="0" width="18" height="16" fill="#74d6dc"/><rect x="1378" y="0" width="18" height="16" fill="#aad6d6"/><rect x="1396" y="0" width="18" height="16" fill="#447aaa"/><rect x="1414" y="0" width="18" height="16" fill="#3d7fdc"/><rect x="1432" y="0" width="18" height="16" fill="#2eaad6"/><rect x="1450" y="0" width="18" height="16" fill="#74aad6"/><rect x="1468" y="0" width="18" height="16" fill="#444477"/><rect x="1486" y="0" width="18" height="16" fill="#4444aa"/><rect x="1504" y="0" width="18" height="16" fill="#4444d6"/><rect x="1522" y="0" width="18" height="16" fill="#7a7aaa"/><rect x="1540" y="0" width="18" height="16" fill="#7a7ad6"/><rect x="1558" y="0" width="18" height="16" fill="#aaaad6"/><rect x="1576" y="0" width="18" height="16" fill="#7a44aa"/><rect x="1594" y="0" width="18" height="16" fill="#7a44d6"/><rect x="1612" y="0" width="18" height="16" fill="#aa4ad6"/><rect x="1630" y="0" width="18" height="16" fill="#aa7ad6"/><rect x="1648" y="0" width="18" height="16" fill="#7a447a"/><rect x="1666" y="0" width="18" height="16" fill="#aa4aaa"/><rect x="1684" y="0" width="18" height="16" fill="#b07aaa"/><rect x="1702" y="0" width="18" height="16" fill="#dc4adc"/><rect x="1720" y="0" width="18" height="16" fill="#dc7adc"/><rect x="1738" y="0" width="18" height="16" fill="#dcaadc"/><rect x="1756" y="0" width="18" height="16" fill="#aa4a7a"/><rect x="1774" y="0" width="18" height="16" fill="#dc4a7a"/><rect x="1792" y="0" width="18" height="16" fill="#dc4aaa"/><rect x="1810" y="0" width="18" height="16" fill="#dc7aaa"/></svg>
<div class="ab" style="left:0px;top:1037px;width:1920px;height:3px;background:#262626;"></div>
<div class="ab" style="left:1604px;top:153px;width:298px;height:330px;background:#434343;"></div>
<div class="ab" style="left:1902px;top:131px;width:16px;height:351px;background:#393939;"></div>
<div class="ab" style="left:1903px;top:155px;width:14px;height:327px;background:#888888;border-radius:7px 7px 0 0"></div>
<div class="ab" style="left:1917px;top:131px;width:3px;height:806px;background:#262626;"></div>
<svg style="left:1904px;top:141px;" width="12" height="8" viewBox="0 0 12 8"><path d="M1 7 L6 2 L11 7" fill="none" stroke="#ddd" stroke-width="1.3"/></svg>
<div class="ab" style="left:1590px;top:161px;width:14px;height:19px;background:#3a3a3a;"></div>
<div class="ab" style="left:1604px;top:161px;width:285px;height:23px;background:#3a3a3a;"></div>
<div class="ab" style="left:1633px;top:161px;width:94px;height:24px;background:#434343;border:1px solid #555;border-bottom:none"></div>
<div class="ab" style="left:1604px;top:184px;width:29px;height:1px;background:#5a5a5a;"></div>
<div class="ab" style="left:1727px;top:184px;width:162px;height:1px;background:#5a5a5a;"></div>
<svg style="left:1595px;top:167px;" width="12" height="12" viewBox="0 0 12 12"><circle cx="6" cy="6" r="6" fill="#9a9a9a"/><path d="M3.3 3.3 L8.7 8.7 M8.7 3.3 L3.3 8.7" stroke="#111" stroke-width="1.2"/></svg>
<svg style="left:1609px;top:168px;" width="9" height="10" viewBox="0 0 9 10"><path d="M1 1 L4 5 L1 9 M5 1 L8 5 L5 9" fill="none" stroke="#cfcfcf" stroke-width="1.1"/></svg>
<div class="ab" style="left:1623px;top:166px;width:1.5px;height:14px;background:#777;"></div>
<div class="ab" style="left:1627px;top:166px;width:1.5px;height:14px;background:#777;"></div>
<div class="t" style="left:1648.0px;top:166.4px;font-size:13.19px;line-height:13.19px;color:#f0f0f0;transform:scaleX(0.855);">Shape Effects</div>
<div class="t" style="left:1742.0px;top:166.4px;font-size:13.19px;line-height:13.19px;color:#9a9a9a;transform:scaleX(0.885);">Appearance</div>
<svg style="left:1867px;top:166px;" width="14" height="13" viewBox="0 0 14 13"><path d="M0 1 H14 M0 4.7 H14 M0 8.3 H14 M0 12 H14" stroke="#e0e0e0" stroke-width="1.3"/></svg>
<div class="ab" style="left:1604px;top:185px;width:285px;height:298px;background:#434343;border-right:1px solid #555;border-bottom:1px solid #555"></div>
<div class="t" style="left:1625.0px;top:195.4px;font-size:13.19px;line-height:13.19px;color:#ececec;transform:scaleX(0.835);">Styles</div>
<div class="ab" style="left:1661px;top:192px;width:220px;height:20px;background:#777777;"></div>
<div class="t" style="left:1667.0px;top:195.4px;font-size:13.19px;line-height:13.19px;color:#f4f4f4;transform:scaleX(0.836);">Custom</div>
<svg style="left:1863px;top:200px;" width="13" height="8" viewBox="0 0 13 8"><path d="M1 1 L6.5 6.5 L12 1" fill="none" stroke="#f0f0f0" stroke-width="1.6"/></svg>
<div class="ab" style="left:1604px;top:223px;width:263px;height:26px;background:#363636;"></div>
<div class="ab" style="left:1604px;top:249px;width:263px;height:26px;background:#484848;"></div>
<div class="ab" style="left:1604px;top:275px;width:263px;height:26px;background:#363636;"></div>
<div class="ab" style="left:1604px;top:301px;width:263px;height:26px;background:#484848;"></div>
<div class="ab" style="left:1604px;top:327px;width:263px;height:26px;background:#363636;"></div>
<div class="ab" style="left:1604px;top:353px;width:263px;height:26px;background:#484848;"></div>
<div class="ab" style="left:1604px;top:379px;width:263px;height:26px;background:#363636;"></div>
<div class="ab" style="left:1604px;top:405px;width:263px;height:39px;background:#484848;"></div>
<div class="ab" style="left:1867px;top:222px;width:15px;height:222px;background:#3d3d3d;"></div>
<div class="ab" style="left:1870px;top:223px;width:10px;height:211px;background:#9a9a9a;border-radius:5px"></div>
<div class="ab" style="left:1604px;top:444px;width:277px;height:2px;background:#2e2e2e;"></div>
<svg style="left:1666px;top:455px;" width="18" height="18" viewBox="0 0 18 18"><rect x="1" y="1" width="16" height="16" rx="3" fill="none" stroke="#9a9a9a" stroke-width="1.3"/><path d="M9 4.5 V13.5 M4.5 9 H13.5" stroke="#9a9a9a" stroke-width="1.4"/></svg>
<svg style="left:1694px;top:455px;" width="18" height="18" viewBox="0 0 18 18"><path d="M10 3 H3 V16 H15 V9" fill="none" stroke="#9a9a9a" stroke-width="1.4"/><path d="M7 12 L8 9 L15 2 L17 4 L10 11 Z" fill="#9a9a9a"/></svg>
<svg style="left:1722px;top:455px;" width="18" height="18" viewBox="0 0 18 18"><path d="M3 3 L15 2 L16 15 L2 14 Z" fill="none" stroke="#9a9a9a" stroke-width="1.3"/><circle cx="3" cy="3" r="2" fill="#434343" stroke="#9a9a9a"/><circle cx="15" cy="2.5" r="2" fill="#434343" stroke="#9a9a9a"/><circle cx="16" cy="15" r="2" fill="#434343" stroke="#9a9a9a"/><circle cx="2.5" cy="14" r="2" fill="#434343" stroke="#9a9a9a"/></svg>
<svg style="left:1750px;top:455px;" width="18" height="18" viewBox="0 0 18 18"><path d="M1 9 C5 3 13 3 17 9 C13 15 5 15 1 9 Z" fill="none" stroke="#9a9a9a" stroke-width="1.3"/><circle cx="9" cy="9" r="2.5" fill="none" stroke="#9a9a9a" stroke-width="1.3"/></svg>
<svg style="left:1778px;top:455px;" width="18" height="18" viewBox="0 0 18 18"><path d="M1 11 C4 5 7 7 9 9 C11 11 14 13 17 7" fill="none" stroke="#9a9a9a" stroke-width="2"/></svg>
<svg style="left:1806px;top:455px;" width="18" height="18" viewBox="0 0 18 18"><rect x="4" y="1" width="13" height="13" rx="2" fill="none" stroke="#9a9a9a" stroke-width="1.3"/><rect x="1" y="4" width="13" height="13" rx="2" fill="#434343" stroke="#9a9a9a" stroke-width="1.3"/><path d="M7.5 7 V14 M4 10.5 H11" stroke="#9a9a9a" stroke-width="1.3"/></svg>
<svg style="left:1834px;top:455px;" width="18" height="18" viewBox="0 0 18 18"><rect x="1" y="1" width="12" height="12" rx="1.5" fill="none" stroke="#9a9a9a" stroke-width="1.3"/><rect x="10" y="10" width="7" height="7" rx="1" fill="#434343" stroke="#9a9a9a" stroke-width="1.3"/></svg>
<svg style="left:1862px;top:455px;" width="18" height="18" viewBox="0 0 18 18"><path d="M2 4 H16 M6 4 V2 H12 V4 M4 4 L5 17 H13 L14 4 M7 7 V14 M9 7 V14 M11 7 V14" fill="none" stroke="#9a9a9a" stroke-width="1.2"/></svg>
<div class="ab" style="left:1679px;top:484px;width:240px;height:548px;background:#434343;border-left:2px solid #505050;border-right:2px solid #555"></div>
<div class="ab" style="left:1681px;top:484px;width:236px;height:22px;background:#393939;"></div>
<div class="ab" style="left:1722px;top:485px;width:55px;height:21px;background:#3e3e3e;border:1px solid #505050;border-bottom:none"></div>
<div class="ab" style="left:1778px;top:484px;width:79px;height:23px;background:#434343;border:1px solid #5a5a5a;border-bottom:none"></div>
<div class="ab" style="left:1682px;top:506px;width:40px;height:1.5px;background:#666;"></div>
<div class="ab" style="left:1857px;top:506px;width:61px;height:1.5px;background:#666;"></div>
<svg style="left:1683px;top:489px;" width="12" height="12" viewBox="0 0 12 12"><circle cx="6" cy="6" r="6" fill="#9a9a9a"/><path d="M3.3 3.3 L8.7 8.7 M8.7 3.3 L3.3 8.7" stroke="#111" stroke-width="1.2"/></svg>
<svg style="left:1697px;top:490px;" width="9" height="10" viewBox="0 0 9 10"><path d="M1 1 L4 5 L1 9 M5 1 L8 5 L5 9" fill="none" stroke="#cfcfcf" stroke-width="1.1"/></svg>
<div class="ab" style="left:1711px;top:488px;width:1.5px;height:14px;background:#777;"></div>
<div class="ab" style="left:1715px;top:488px;width:1.5px;height:14px;background:#777;"></div>
<div class="t" style="left:1736.0px;top:489.4px;font-size:13.19px;line-height:13.19px;color:#9a9a9a;transform:scaleX(0.865);">Shape</div>
<svg style="left:1781px;top:489px;" width="7" height="12" viewBox="0 0 7 12"><path d="M1 4 L3.5 1.5 L6 4 M1 8 L3.5 10.5 L6 8" fill="none" stroke="#ddd" stroke-width="1.1"/></svg>
<div class="t" style="left:1792.0px;top:489.4px;font-size:13.19px;line-height:13.19px;color:#f2f2f2;transform:scaleX(0.937);">Alignment</div>
<svg style="left:1898px;top:489px;" width="13" height="12" viewBox="0 0 13 12"><path d="M0 1 H13 M0 4.3 H13 M0 7.6 H13 M0 11 H13" stroke="#e0e0e0" stroke-width="1.3"/></svg>
<div class="t" style="left:1687.0px;top:517.5px;font-size:12.50px;line-height:12.50px;color:#ececec;transform:scaleX(0.951);">Align Positions</div>
<svg style="left:1695px;top:542px;" width="20" height="20" viewBox="0 0 20 20"><rect x="3" y="3" width="9" height="6" fill="#a8a8a8"/><rect x="3" y="11" width="15" height="6" fill="#a8a8a8"/><rect x="1.5" y="1" width="1.6" height="18" fill="#e6e6e6"/></svg>
<svg style="left:1721px;top:542px;" width="20" height="20" viewBox="0 0 20 20"><rect x="5" y="3" width="10" height="6" fill="#a8a8a8"/><rect x="2" y="11" width="16" height="6" fill="#a8a8a8"/><rect x="9.2" y="1" width="1.6" height="18" fill="#e6e6e6"/></svg>
<svg style="left:1748px;top:542px;" width="20" height="20" viewBox="0 0 20 20"><rect x="8" y="3" width="9" height="6" fill="#a8a8a8"/><rect x="2" y="11" width="15" height="6" fill="#a8a8a8"/><rect x="17" y="1" width="1.6" height="18" fill="#e6e6e6"/></svg>
<svg style="left:1776px;top:542px;" width="20" height="20" viewBox="0 0 20 20"><rect x="2" y="9" width="8" height="8" fill="#a8a8a8"/><rect x="11" y="3" width="7" height="8" fill="#a8a8a8"/><rect x="9.5" y="1" width="1.6" height="18" fill="#e6e6e6"/></svg>
<svg style="left:1802px;top:542px;" width="20" height="20" viewBox="0 0 20 20"><rect x="3" y="4" width="7" height="14" fill="#a8a8a8"/><rect x="12" y="4" width="6" height="9" fill="#a8a8a8"/><rect x="1" y="2" width="18" height="1.6" fill="#e6e6e6"/></svg>
<svg style="left:1829px;top:542px;" width="20" height="20" viewBox="0 0 20 20"><rect x="3" y="2" width="7" height="16" fill="#a8a8a8"/><rect x="12" y="5" width="6" height="10" fill="#a8a8a8"/><rect x="1" y="9.2" width="18" height="1.6" fill="#e6e6e6"/></svg>
<svg style="left:1857px;top:542px;" width="20" height="20" viewBox="0 0 20 20"><rect x="3" y="2" width="7" height="14" fill="#a8a8a8"/><rect x="12" y="7" width="6" height="9" fill="#a8a8a8"/><rect x="1" y="16.5" width="18" height="1.6" fill="#e6e6e6"/></svg>
<svg style="left:1884px;top:542px;" width="20" height="20" viewBox="0 0 20 20"><rect x="3" y="11" width="9" height="8" fill="#a8a8a8"/><rect x="10" y="1" width="8" height="8" fill="#a8a8a8"/><rect x="1" y="9.5" width="18" height="1.6" fill="#e6e6e6"/></svg>
<div class="ab" style="left:1687px;top:574px;width:223px;height:1.5px;background:#333;"></div>
<div class="t" style="left:1687.0px;top:583.5px;font-size:12.50px;line-height:12.50px;color:#ececec;transform:scaleX(0.966);">Distribute</div>
<svg style="left:1694px;top:609px;" width="20" height="20" viewBox="0 0 20 20"><rect x="1" y="2" width="1.6" height="16" fill="#e6e6e6"/><rect x="4" y="3" width="5" height="14" fill="#a8a8a8"/><rect x="10" y="1" width="1.6" height="18" fill="#e6e6e6"/><rect x="13" y="5" width="5" height="10" fill="#a8a8a8"/></svg>
<svg style="left:1721px;top:609px;" width="20" height="20" viewBox="0 0 20 20"><rect x="1" y="2" width="1.6" height="16" fill="#e6e6e6"/><rect x="4" y="3" width="5" height="14" fill="#a8a8a8"/><rect x="10" y="1" width="1.6" height="18" fill="#e6e6e6"/><rect x="13" y="5" width="5" height="10" fill="#a8a8a8"/></svg>
<svg style="left:1748px;top:609px;" width="20" height="20" viewBox="0 0 20 20"><rect x="1" y="2" width="1.6" height="16" fill="#e6e6e6"/><rect x="4" y="3" width="5" height="14" fill="#a8a8a8"/><rect x="10" y="1" width="1.6" height="18" fill="#e6e6e6"/><rect x="13" y="5" width="5" height="10" fill="#a8a8a8"/></svg>
<svg style="left:1776px;top:609px;" width="20" height="20" viewBox="0 0 20 20"><rect x="1" y="2" width="1.6" height="16" fill="#e6e6e6"/><rect x="4" y="3" width="5" height="14" fill="#a8a8a8"/><rect x="10" y="1" width="1.6" height="18" fill="#e6e6e6"/><rect x="13" y="5" width="5" height="10" fill="#a8a8a8"/></svg>
<svg style="left:1802px;top:609px;" width="20" height="20" viewBox="0 0 20 20"><rect x="2" y="1" width="16" height="1.6" fill="#e6e6e6"/><rect x="4" y="3" width="12" height="5" fill="#a8a8a8"/><rect x="1" y="10" width="18" height="1.6" fill="#e6e6e6"/><rect x="5" y="13" width="10" height="5" fill="#a8a8a8"/></svg>
<svg style="left:1829px;top:609px;" width="20" height="20" viewBox="0 0 20 20"><rect x="2" y="1" width="16" height="1.6" fill="#e6e6e6"/><rect x="4" y="3" width="12" height="5" fill="#a8a8a8"/><rect x="1" y="10" width="18" height="1.6" fill="#e6e6e6"/><rect x="5" y="13" width="10" height="5" fill="#a8a8a8"/></svg>
<svg style="left:1856px;top:609px;" width="20" height="20" viewBox="0 0 20 20"><rect x="2" y="1" width="16" height="1.6" fill="#e6e6e6"/><rect x="4" y="3" width="12" height="5" fill="#a8a8a8"/><rect x="1" y="10" width="18" height="1.6" fill="#e6e6e6"/><rect x="5" y="13" width="10" height="5" fill="#a8a8a8"/></svg>
<svg style="left:1884px;top:609px;" width="20" height="20" viewBox="0 0 20 20"><rect x="2" y="1" width="16" height="1.6" fill="#e6e6e6"/><rect x="4" y="3" width="12" height="5" fill="#a8a8a8"/><rect x="1" y="10" width="18" height="1.6" fill="#e6e6e6"/><rect x="5" y="13" width="10" height="5" fill="#a8a8a8"/></svg>
<div class="ab" style="left:1687px;top:641px;width:223px;height:1.5px;background:#333;"></div>
<div class="t" style="left:1731.0px;top:653.5px;font-size:12.50px;line-height:12.50px;color:#ececec;transform:scaleX(0.970);">Angle</div>
<div class="ab" style="left:1768px;top:648px;width:80px;height:20px;background:#2e2e2e;"></div>
<div class="t" style="left:1772.0px;top:652.5px;font-size:12.50px;line-height:12.50px;color:#f0f0f0;transform:scaleX(0.837);">0°</div>
<div class="ab" style="left:1848px;top:648px;width:13px;height:20px;background:#5a5a5a;"></div>
<svg style="left:1848px;top:649px;" width="13" height="18" viewBox="0 0 13 18"><path d="M3 6.5 L6.5 3 L10 6.5 M3 11.5 L6.5 15 L10 11.5" fill="none" stroke="#ddd" stroke-width="1.2"/></svg>
<div class="t" style="left:1730.0px;top:677.5px;font-size:12.50px;line-height:12.50px;color:#ececec;transform:scaleX(0.903);">Space</div>
<div class="ab" style="left:1768px;top:672px;width:80px;height:20px;background:#2e2e2e;"></div>
<div class="t" style="left:1772.0px;top:676.5px;font-size:12.50px;line-height:12.50px;color:#f0f0f0;transform:scaleX(0.959);">0.0 pt</div>
<div class="ab" style="left:1770px;top:699px;width:15px;height:15px;background:#6b6b6b;border:1px solid #2a2a2a"></div>
<div class="t" style="left:1789.0px;top:700.5px;font-size:12.50px;line-height:12.50px;color:#ececec;transform:scaleX(0.925);">Sticky Groups</div>
<div class="ab" style="left:1770px;top:722px;width:15px;height:15px;background:#3a63d1;border:1px solid #2a2a2a"></div>
<svg style="left:1770px;top:722px;" width="15" height="15" viewBox="0 0 15 15"><path d="M3 7.5 L6 11 L12 3.5" fill="none" stroke="#fff" stroke-width="2"/></svg>
<div class="t" style="left:1789.0px;top:724.5px;font-size:12.50px;line-height:12.50px;color:#ececec;transform:scaleX(0.971);">Viewing Angle</div>
<div class="ab" style="left:1687px;top:745px;width:223px;height:1.5px;background:#333;"></div>
<div class="ab" style="left:1687px;top:754px;width:22px;height:22px;background:#5399d4;"></div>
<svg style="left:1687px;top:754px;" width="22" height="22" viewBox="0 0 22 22"><rect x="5" y="5" width="12" height="12" fill="none" stroke="#fff" stroke-width="1.5"/><path d="M2 6 V2 H6 M16 2 H20 V6 M20 16 V20 H16 M6 20 H2 V16" fill="none" stroke="#fff" stroke-width="1.2"/></svg>
<svg style="left:1719px;top:756px;" width="18" height="18" viewBox="0 0 18 18"><rect x="1" y="1" width="16" height="16" fill="none" stroke="#ddd" stroke-width="1.2"/><circle cx="11" cy="6.5" r="2.5" fill="#ddd"/><path d="M10 8 L4 14" stroke="#ddd" stroke-width="2"/></svg>
<svg style="left:1751px;top:756px;" width="14" height="18" viewBox="0 0 14 18"><path d="M1 1 H9 L13 5 V17 H1 Z" fill="none" stroke="#ddd" stroke-width="1.2"/><path d="M3.5 8 H10.5 M3.5 11 H10.5 M3.5 14 H10.5" stroke="#ddd"/></svg>
<svg style="left:1831px;top:755px;" width="18" height="20" viewBox="0 0 18 20"><rect x="1" y="2" width="16" height="16" fill="none" stroke="#bbb" stroke-dasharray="2 2"/><path d="M4 15 L9 6 L14 15 Z" fill="#999"/><circle cx="12" cy="12" r="4" fill="#888"/></svg>
<svg style="left:1861px;top:756px;" width="18" height="18" viewBox="0 0 18 18"><path d="M2 13 L7 4 L12 13 Z" fill="#aaa"/><circle cx="12" cy="11" r="5" fill="#999"/><rect x="2" y="11" width="10" height="5" fill="#aaa"/></svg>
<div class="ab" style="left:1889px;top:754px;width:21px;height:22px;background:#5399d4;"></div>
<svg style="left:1889px;top:754px;" width="21" height="22" viewBox="0 0 21 22"><path d="M5 14 L9 6 L13 14 Z" fill="#666"/><circle cx="13" cy="13" r="4" fill="none" stroke="#ddd"/><path d="M2 2 V19 H19" fill="none" stroke="#fff" stroke-width="1.2"/></svg>
<div class="ab" style="left:1687px;top:785px;width:211px;height:79px;background:#535353;"></div>
<svg style="left:1696px;top:794px;" width="8" height="9" viewBox="0 0 8 9"><path d="M0 0 L8 4.5 L0 9 Z" fill="#f0f0f0"/></svg>
<div class="t" style="left:1711.0px;top:792.5px;font-size:12.50px;line-height:12.50px;color:#f0f0f0;transform:scaleX(0.931);">Stroke Stripe - Presets</div>
<svg style="left:1871px;top:791px;" width="15" height="15" viewBox="0 0 15 15"><circle cx="7.5" cy="7.5" r="6.8" fill="none" stroke="#ddd" stroke-width="1"/><path d="M4.8 4.8 L10.2 10.2 M10.2 4.8 L4.8 10.2" stroke="#ddd" stroke-width="1"/></svg>
<svg style="left:1696px;top:820px;" width="8" height="9" viewBox="0 0 8 9"><path d="M0 0 L8 4.5 L0 9 Z" fill="#f0f0f0"/></svg>
<div class="t" style="left:1711.0px;top:818.5px;font-size:12.50px;line-height:12.50px;color:#f0f0f0;transform:scaleX(0.934);">Stroke Profile - Presets</div>
<svg style="left:1871px;top:817px;" width="15" height="15" viewBox="0 0 15 15"><circle cx="7.5" cy="7.5" r="6.8" fill="none" stroke="#ddd" stroke-width="1"/><path d="M4.8 4.8 L10.2 10.2 M10.2 4.8 L4.8 10.2" stroke="#ddd" stroke-width="1"/></svg>
<svg style="left:1696px;top:846px;" width="8" height="9" viewBox="0 0 8 9"><path d="M0 0 L8 4.5 L0 9 Z" fill="#f0f0f0"/></svg>
<div class="t" style="left:1711.0px;top:844.5px;font-size:12.50px;line-height:12.50px;color:#f0f0f0;transform:scaleX(0.920);">Glyphs - Presets</div>
<svg style="left:1871px;top:843px;" width="15" height="15" viewBox="0 0 15 15"><circle cx="7.5" cy="7.5" r="6.8" fill="none" stroke="#ddd" stroke-width="1"/><path d="M4.8 4.8 L10.2 10.2 M10.2 4.8 L4.8 10.2" stroke="#ddd" stroke-width="1"/></svg>
<div class="ab" style="left:1898px;top:784px;width:14px;height:168px;background:#3d3d3d;"></div>
<div class="ab" style="left:1900px;top:785px;width:10px;height:167px;background:#9a9a9a;border-radius:5px"></div>
<div class="ab" style="left:1687px;top:962px;width:224px;height:20px;background:#2f2f2f;border-radius:8px"></div>
<svg style="left:1693px;top:964px;" width="15" height="16" viewBox="0 0 15 16"><circle cx="9.5" cy="5.5" r="4.5" fill="none" stroke="#ddd" stroke-width="1.4"/><path d="M6.5 8.5 L1 14.5" stroke="#ddd" stroke-width="1.8"/></svg>
<div class="t" style="left:1711.0px;top:967.5px;font-size:12.22px;line-height:12.22px;color:#9a9a9a;transform:scaleX(0.904);">Search</div>
<svg style="left:1890px;top:965px;" width="14" height="14" viewBox="0 0 14 14"><circle cx="7" cy="7" r="6.3" fill="none" stroke="#eee" stroke-width="1.2"/><path d="M4.5 4.5 L9.5 9.5 M9.5 4.5 L4.5 9.5" stroke="#eee" stroke-width="1.3"/></svg>
<div class="ab" style="left:1687px;top:992px;width:224px;height:1.5px;background:#333;"></div>
<svg style="left:1723px;top:1004px;" width="20" height="20" viewBox="0 0 20 20"><circle cx="10" cy="10" r="8.5" fill="none" stroke="#f0f0f0" stroke-width="1.8"/><path d="M6 10 L9 13 L14 7" fill="none" stroke="#f0f0f0" stroke-width="1.8"/></svg>
<svg style="left:1751px;top:1004px;" width="20" height="20" viewBox="0 0 20 20"><path d="M3 9 A7 7 0 0 1 16 6 M17 11 A7 7 0 0 1 4 14" fill="none" stroke="#f0f0f0" stroke-width="2.2"/><path d="M13 2 L17 6 L12 8 Z M7 18 L3 14 L8 12 Z" fill="#f0f0f0"/></svg>
<svg style="left:1779px;top:1004px;" width="20" height="20" viewBox="0 0 20 20"><path d="M11 4 H3 V17 H16 V9" fill="none" stroke="#8a8a8a" stroke-width="1.5"/><path d="M8 12 L17 3" stroke="#8a8a8a" stroke-width="2.5"/></svg>
<svg style="left:1807px;top:1004px;" width="20" height="20" viewBox="0 0 20 20"><rect x="4" y="5" width="15" height="9" rx="1" fill="none" stroke="#8a8a8a" stroke-width="1.4"/><path d="M4 2 V18 M2 2 H6 M2 18 H6" stroke="#8a8a8a" stroke-width="1.2"/></svg>
<svg style="left:1835px;top:1004px;" width="20" height="20" viewBox="0 0 20 20"><path d="M2 9 V18 H18 V9 M10 14 V2 M6 6 L10 2 L14 6" fill="none" stroke="#8a8a8a" stroke-width="1.6"/></svg>
<svg style="left:1863px;top:1004px;" width="20" height="20" viewBox="0 0 20 20"><circle cx="10" cy="10" r="8.5" fill="none" stroke="#8a8a8a" stroke-width="1.3"/><path d="M10 5 V15 M5 10 H15" stroke="#8a8a8a" stroke-width="1.4"/></svg>
<svg style="left:1891px;top:1004px;" width="20" height="20" viewBox="0 0 20 20"><circle cx="10" cy="10" r="8.5" fill="none" stroke="#8a8a8a" stroke-width="1.3"/><path d="M6.5 6.5 L13.5 13.5 M13.5 6.5 L6.5 13.5" stroke="#8a8a8a" stroke-width="1.3"/></svg>
<svg style="left:1901px;top:1030px;" width="11" height="7" viewBox="0 0 11 7"><path d="M0.5 1 H3.5 L5.5 3.5 L7.5 1 H10.5" fill="none" stroke="#e0e0e0" stroke-width="1"/></svg>
<div class="ab" style="left:0px;top:1040px;width:1920px;height:40px;background:linear-gradient(90deg,#1f343d 0%,#1e3040 45%,#1c2b46 100%);"></div>
<svg style="left:16px;top:1052px;" width="17" height="16" viewBox="0 0 17 16"><path d="M0 2.2 L7 1.2 V7.5 H0 Z M8 1 L17 0 V7.5 H8 Z M0 8.5 H7 V14.8 L0 13.8 Z M8 8.5 H17 V16 L8 15 Z" fill="#f4f4f4"/></svg>
<div class="ab" style="left:1160px;top:1040px;width:100px;height:40px;background:#5a6976;"></div>
<div class="ab" style="left:55px;top:1078px;width:92px;height:2px;background:#7cb9e8;"></div>
<div class="t" style="left:86.0px;top:1053.4px;font-size:13.19px;line-height:13.19px;color:#f4f4f4;transform:scaleX(0.915);">FreeHan...</div>
<div class="ab" style="left:156px;top:1078px;width:92px;height:2px;background:#7cb9e8;"></div>
<div class="t" style="left:187.0px;top:1053.4px;font-size:13.19px;line-height:13.19px;color:#f4f4f4;transform:scaleX(0.934);">PUMA-...</div>
<div class="ab" style="left:257px;top:1078px;width:92px;height:2px;background:#7cb9e8;"></div>
<div class="t" style="left:288.0px;top:1053.4px;font-size:13.19px;line-height:13.19px;color:#f4f4f4;transform:scaleX(0.972);">Macrom...</div>
<div class="ab" style="left:358px;top:1078px;width:92px;height:2px;background:#7cb9e8;"></div>
<div class="t" style="left:388.0px;top:1053.4px;font-size:13.19px;line-height:13.19px;color:#f4f4f4;transform:scaleX(1.076);">临时.jdp...</div>
<div class="ab" style="left:459px;top:1078px;width:93px;height:2px;background:#7cb9e8;"></div>
<div class="t" style="left:489.0px;top:1053.4px;font-size:13.19px;line-height:13.19px;color:#f4f4f4;transform:scaleX(1.127);">精鸣雕刻...</div>
<div class="ab" style="left:559px;top:1078px;width:91px;height:2px;background:#7cb9e8;"></div>
<div class="t" style="left:589.0px;top:1053.4px;font-size:13.19px;line-height:13.19px;color:#f4f4f4;transform:scaleX(1.213);">微信</div>
<div class="ab" style="left:659px;top:1078px;width:91px;height:2px;background:#7cb9e8;"></div>
<div class="t" style="left:689.0px;top:1053.4px;font-size:13.19px;line-height:13.19px;color:#f4f4f4;transform:scaleX(1.203);">稳步-龚</div>
<div class="ab" style="left:760px;top:1078px;width:92px;height:2px;background:#7cb9e8;"></div>
<div class="t" style="left:791.0px;top:1053.4px;font-size:13.19px;line-height:13.19px;color:#f4f4f4;transform:scaleX(0.972);">Macrom...</div>
<div class="ab" style="left:861px;top:1078px;width:92px;height:2px;background:#7cb9e8;"></div>
<div class="t" style="left:892.0px;top:1053.4px;font-size:13.19px;line-height:13.19px;color:#f4f4f4;transform:scaleX(0.929);">2.ai* @ ...</div>
<div class="ab" style="left:962px;top:1078px;width:91px;height:2px;background:#7cb9e8;"></div>
<div class="t" style="left:993.0px;top:1053.4px;font-size:13.19px;line-height:13.19px;color:#f4f4f4;transform:scaleX(0.967);">2.svg - I...</div>
<div class="ab" style="left:1063px;top:1078px;width:92px;height:2px;background:#7cb9e8;"></div>
<div class="t" style="left:1094.0px;top:1053.4px;font-size:13.19px;line-height:13.19px;color:#f4f4f4;transform:scaleX(0.947);">901 - Ev...</div>
<div class="ab" style="left:1160px;top:1078px;width:100px;height:2px;background:#7cb9e8;"></div>
<div class="t" style="left:1195.0px;top:1053.4px;font-size:13.19px;line-height:13.19px;color:#f4f4f4;transform:scaleX(0.969);">Untitled...</div>
<div class="ab" style="left:1265px;top:1078px;width:92px;height:2px;background:#7cb9e8;"></div>
<div class="t" style="left:1296.0px;top:1053.4px;font-size:13.19px;line-height:13.19px;color:#f4f4f4;transform:scaleX(0.974);">QQ</div>
<div class="ab" style="left:1366px;top:1078px;width:92px;height:2px;background:#7cb9e8;"></div>
<div class="t" style="left:1397.0px;top:1053.4px;font-size:13.19px;line-height:13.19px;color:#f4f4f4;transform:scaleX(0.985);">Adobe ...</div>
<div class="ab" style="left:1467px;top:1078px;width:92px;height:2px;background:#7cb9e8;"></div>
<div class="t" style="left:1498.0px;top:1053.4px;font-size:13.19px;line-height:13.19px;color:#f4f4f4;transform:scaleX(0.945);">E:\2024</div>
<svg style="left:58px;top:1048px;" width="24" height="24" viewBox="0 0 24 24"><circle cx="12" cy="12" r="11.5" fill="#1a1a9a"/><circle cx="12" cy="12" r="8" fill="none" stroke="#e8e8ff" stroke-width="1.6"/><circle cx="13" cy="12" r="4.5" fill="none" stroke="#c8c8ff" stroke-width="1.4"/><path d="M13 9 H23 M13 12 H23 M13 15 H23" stroke="#d03030" stroke-width="1.2"/></svg>
<svg style="left:160px;top:1048px;" width="24" height="24" viewBox="0 0 24 24"><circle cx="11.5" cy="12" r="11" fill="#db4437"/><path d="M11.5 12 L1.5 7 A11 11 0 0 0 8 22.5 Z" fill="#0f9d58"/><path d="M11.5 12 L8 22.5 A11 11 0 0 0 22.5 12 L21.5 7 Z" fill="#f4c20d"/><circle cx="11.5" cy="12" r="5" fill="#fff"/><circle cx="11.5" cy="12" r="3.8" fill="#4285f4"/></svg>
<svg style="left:260px;top:1048px;" width="24" height="24" viewBox="0 0 24 24"><circle cx="11" cy="12" r="11" fill="#1fa8b8"/><circle cx="11" cy="12" r="9" fill="#29c4d0"/><path d="M6 18 L10 6 H16 M8 12 H13 M12 18 L14 12 H18 L16 18" fill="none" stroke="#10384a" stroke-width="2.2"/></svg>
<svg style="left:763px;top:1048px;" width="24" height="24" viewBox="0 0 24 24"><circle cx="11" cy="12" r="11" fill="#1fa8b8"/><circle cx="11" cy="12" r="9" fill="#29c4d0"/><path d="M6 18 L10 6 H16 M8 12 H13 M12 18 L14 12 H18 L16 18" fill="none" stroke="#10384a" stroke-width="2.2"/></svg>
<svg style="left:362px;top:1048px;" width="24" height="24" viewBox="0 0 24 24"><rect x="0" y="0" width="24" height="24" fill="#1e5aa8"/><path d="M5 5 H13 C20 5 20 19 13 19 H6 L8 15 H13 C15 15 15 9 13 9 H9 L5 19" fill="none" stroke="#fff" stroke-width="2.5"/></svg>
<svg style="left:462px;top:1048px;" width="24" height="24" viewBox="0 0 24 24"><ellipse cx="9.5" cy="9.5" rx="9" ry="8" fill="#2bc04a"/><ellipse cx="16" cy="15.5" rx="7.5" ry="6.5" fill="#f2f2f2"/><circle cx="6" cy="8" r="1.2" fill="#1a6a2a"/><circle cx="12" cy="8" r="1.2" fill="#1a6a2a"/><circle cx="13.5" cy="15" r="1" fill="#999"/><circle cx="18.5" cy="15" r="1" fill="#999"/></svg>
<svg style="left:562px;top:1048px;" width="24" height="24" viewBox="0 0 24 24"><ellipse cx="9.5" cy="9.5" rx="9" ry="8" fill="#2bc04a"/><ellipse cx="16" cy="15.5" rx="7.5" ry="6.5" fill="#f2f2f2"/><circle cx="6" cy="8" r="1.2" fill="#1a6a2a"/><circle cx="12" cy="8" r="1.2" fill="#1a6a2a"/><circle cx="13.5" cy="15" r="1" fill="#999"/><circle cx="18.5" cy="15" r="1" fill="#999"/></svg>
<svg style="left:662px;top:1048px;" width="24" height="24" viewBox="0 0 24 24"><ellipse cx="9.5" cy="9.5" rx="9" ry="8" fill="#2bc04a"/><ellipse cx="16" cy="15.5" rx="7.5" ry="6.5" fill="#f2f2f2"/><circle cx="6" cy="8" r="1.2" fill="#1a6a2a"/><circle cx="12" cy="8" r="1.2" fill="#1a6a2a"/><circle cx="13.5" cy="15" r="1" fill="#999"/><circle cx="18.5" cy="15" r="1" fill="#999"/></svg>
<svg style="left:866px;top:1048px;" width="22" height="24" viewBox="0 0 22 24"><rect x="0" y="1" width="20" height="21" fill="#2a1a04" stroke="#ff8a00" stroke-width="1.6"/><text x="3.5" y="17" font-family="Liberation Sans" font-size="12" fill="#ff9a00">Ai</text></svg>
<svg style="left:965px;top:1048px;" width="24" height="24" viewBox="0 0 24 24"><path d="M12 1 L23 14 H17 L19 19 H5 L7 14 H1 Z" fill="#222"/><path d="M12 1 L16 6 L12 8 L8 6 Z" fill="#eee"/><ellipse cx="12" cy="21" rx="5" ry="2" fill="#111"/></svg>
<svg style="left:1067px;top:1048px;" width="24" height="24" viewBox="0 0 24 24"><circle cx="14" cy="9" r="7" fill="none" stroke="#ff7a1a" stroke-width="3.5"/><path d="M9 14 L2 22" stroke="#ff7a1a" stroke-width="4" stroke-linecap="round"/></svg>
<svg style="left:1167px;top:1048px;" width="24" height="24" viewBox="0 0 24 24"><rect x="2" y="4" width="21" height="19" rx="5" fill="#1b9ef0"/><path d="M8 10 L23 8 L15 19 Z" fill="#f4f4f4"/><path d="M1 6 H10 M6 1 V11" stroke="#cfeeff" stroke-width="1.2"/></svg>
<svg style="left:1267px;top:1048px;" width="25" height="24" viewBox="0 0 25 24"><rect x="0" y="0" width="25" height="24" rx="5" fill="#fff"/><ellipse cx="12.5" cy="12" rx="6" ry="9" fill="#111"/><ellipse cx="12.5" cy="15" rx="4.5" ry="5.5" fill="#fff"/><path d="M7 11 H18 L17 13 H8 Z" fill="#e02020"/><path d="M9 8 H16 L12.5 10 Z" fill="#f0b400"/></svg>
<svg style="left:1370px;top:1049px;" width="21" height="22" viewBox="0 0 21 22"><rect x="0" y="0" width="21" height="21" rx="1" fill="#0a2a5a" stroke="#2a6ad0"/><text x="2.5" y="14.5" font-family="Liberation Sans" font-size="11" fill="#4aa0ff" font-weight="bold">Ps</text></svg>
<svg style="left:1473px;top:1048px;" width="15" height="24" viewBox="0 0 15 24"><path d="M0 3 H6 L8 5 H14 V22 H0 Z" fill="#d9a520"/><path d="M2 7 H14 V22 H2 Z" fill="#f7d35a"/></svg>
<svg style="left:1572px;top:1052px;" width="16" height="20" viewBox="0 0 16 20"><ellipse cx="7" cy="9" rx="5" ry="7" fill="#111"/><ellipse cx="7" cy="11" rx="3.5" ry="4.5" fill="#fff"/><path d="M2 9 H12 L11 11 H3 Z" fill="#e02080"/><circle cx="11" cy="15" r="3.5" fill="#20c060"/></svg>
<svg style="left:1595px;top:1052px;" width="16" height="20" viewBox="0 0 16 20"><ellipse cx="7" cy="9" rx="5" ry="7" fill="#111"/><ellipse cx="7" cy="11" rx="3.5" ry="4.5" fill="#fff"/><path d="M2 9 H12 L11 11 H3 Z" fill="#e02020"/><circle cx="11" cy="15" r="3.5" fill="#f09040"/></svg>
<svg style="left:1618px;top:1053px;" width="16" height="16" viewBox="0 0 16 16"><rect x="3" y="1" width="10" height="5" fill="#ddd"/><rect x="0" y="5" width="16" height="8" rx="1" fill="#bbb"/><rect x="3" y="11" width="10" height="4" fill="#eee"/><rect x="6" y="12" width="3" height="2" fill="#2080c0"/></svg>
<svg style="left:1643px;top:1053px;" width="15" height="16" viewBox="0 0 15 16"><circle cx="9.5" cy="6" r="4.5" fill="none" stroke="#ff8c1a" stroke-width="2.2"/><path d="M6 10 L1.5 14.5" stroke="#ff8c1a" stroke-width="2.6" stroke-linecap="round"/></svg>
<svg style="left:1666px;top:1053px;" width="16" height="16" viewBox="0 0 16 16"><path d="M3 2 L14 12 L10 15 L4 14 L1 8 Z" fill="#222" stroke="#ccc" stroke-width="0.9"/><path d="M3 12 L6 15" stroke="#ccc"/></svg>
<svg style="left:1717px;top:1052px;" width="14" height="17" viewBox="0 0 14 17"><rect x="1" y="5" width="8" height="11" rx="1" fill="none" stroke="#e8e8e8" stroke-width="1.1"/><rect x="2.5" y="1" width="5" height="4" fill="none" stroke="#e8e8e8"/><path d="M8 14 L10 16 L14 11" fill="none" stroke="#e8e8e8"/></svg>
<svg style="left:1738px;top:1053px;" width="17" height="16" viewBox="0 0 17 16"><rect x="4" y="2" width="12" height="9" fill="none" stroke="#e8e8e8" stroke-width="1.1"/><path d="M10 11 V14 M6 14 H14" stroke="#e8e8e8"/><rect x="1" y="1" width="4" height="4" fill="#1c2b46" stroke="#e8e8e8" stroke-width="0.9"/><path d="M3 5 V14" stroke="#e8e8e8"/></svg>
<svg style="left:1762px;top:1053px;" width="17" height="16" viewBox="0 0 17 16"><path d="M1 6 H4 L8 2 V14 L4 10 H1 Z" fill="none" stroke="#e8e8e8" stroke-width="1.1"/><path d="M10 5 A4 4 0 0 1 10 11 M12.5 3 A7 7 0 0 1 12.5 13 M15 1 A10 10 0 0 1 15 15" fill="none" stroke="#e8e8e8" stroke-width="1.1"/></svg>
<svg style="left:1785px;top:1052px;" width="18" height="18" viewBox="0 0 18 18"><path d="M2 3 L15 1 V13 L2 15 Z" fill="none" stroke="#e8e8e8" stroke-width="1.1"/><path d="M6 9 A3 3 0 0 1 11 6 M11 8 A3 3 0 0 1 6 10" fill="none" stroke="#e8e8e8"/><circle cx="14" cy="14" r="3" fill="#e01a1a"/></svg>
<div class="t" style="left:1812.0px;top:1051.3px;font-size:13.89px;line-height:13.89px;color:#f0f0f0;transform:scaleX(1.152);">简体</div>
<div class="t" style="left:1854.0px;top:1044.4px;font-size:13.19px;line-height:13.19px;color:#f0f0f0;transform:scaleX(0.935);">13:18:53</div>
<div class="t" style="left:1849.0px;top:1063.4px;font-size:13.19px;line-height:13.19px;color:#f0f0f0;transform:scaleX(0.988);">2024/4/25</div>
<div class="ab" style="left:1916px;top:1040px;width:1px;height:40px;background:#8899aa;"></div>
</body></html>
